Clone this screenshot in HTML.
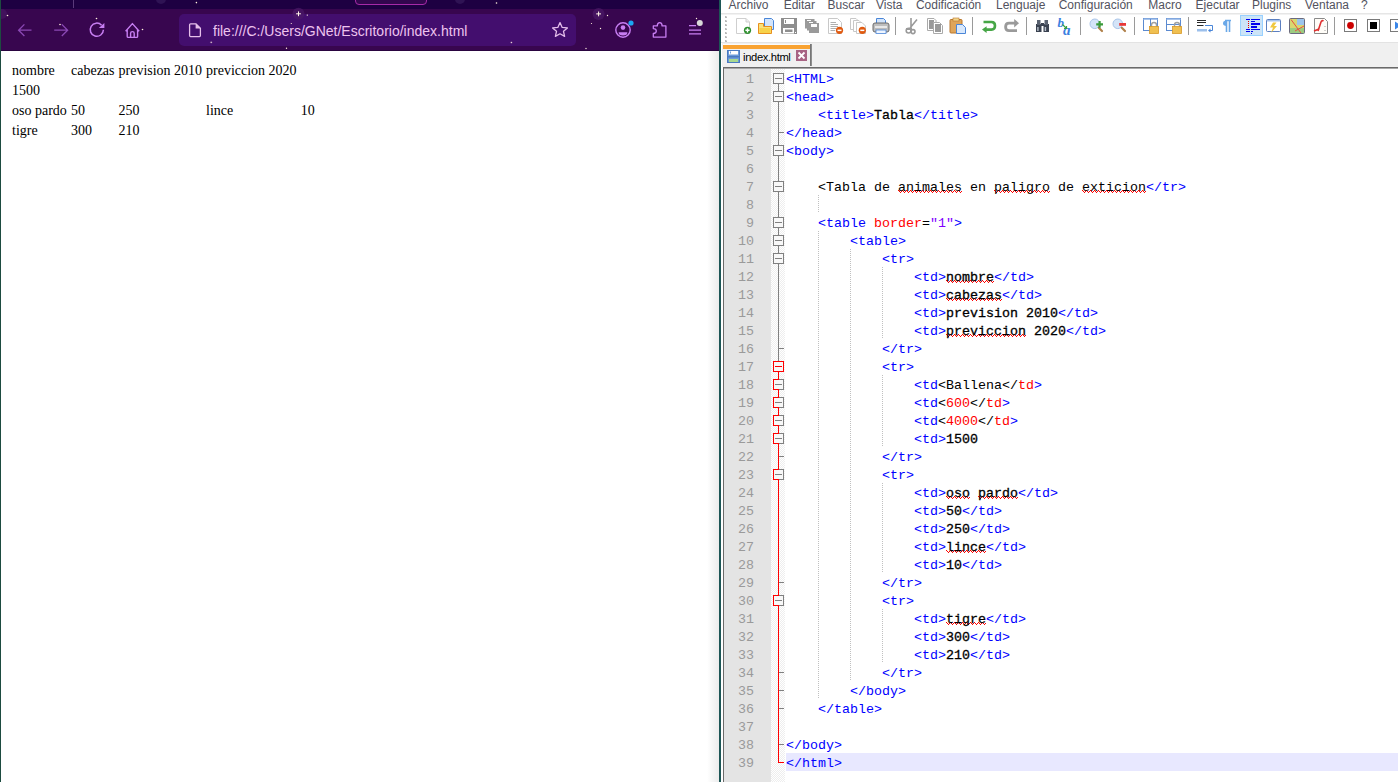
<!DOCTYPE html><html><head><meta charset="utf-8"><title>r</title><style>
*{margin:0;padding:0;box-sizing:border-box}
html,body{width:1398px;height:782px;overflow:hidden;background:#fff;position:relative}
.a{position:absolute}
.sans{font-family:"Liberation Sans",sans-serif}
.serif{font-family:"Liberation Serif",serif}
.mono{font-family:"Liberation Mono",monospace}
</style></head><body><div class="a" style="left:0;top:0;width:719px;height:782px;background:#fff"></div>
<div class="a" style="left:0;top:0;width:719px;height:9px;background:#1e0042"></div>
<div class="a" style="left:355px;top:-10px;width:72px;height:15px;border:1.5px solid #a62aa8;border-radius:4px;background:#32074e"></div>
<div class="a" style="left:0;top:9px;width:719px;height:41px;background:#38064f"></div>
<div class="a" style="left:0;top:50px;width:719px;height:1px;background:#2a0440"></div>
<div class="a" style="left:179px;top:14px;width:397px;height:32px;background:#430e6e;border-radius:5px"></div>
<div class="a sans" style="left:213px;top:22px;font-size:14px;line-height:18px;color:#eec4ee;white-space:nowrap">file:///C:/Users/GNet/Escritorio/index.html</div>
<svg class="a" style="left:0;top:0" width="719" height="51" viewBox="0 0 719 51"><circle cx="2" cy="14" r="5" fill="#4a1a66" opacity="0.6"/><circle cx="161" cy="-1" r="5" fill="#3a2060" opacity="0.6"/><circle cx="460" cy="-1" r="5" fill="#3a2060" opacity="0.6"/><circle cx="298.5" cy="13.8" r="6" fill="#4b1a68" opacity="0.7"/><circle cx="598.6" cy="13.9" r="6" fill="#4b1a68" opacity="0.7"/><line x1="73.5" y1="0" x2="73.5" y2="8" stroke="#5a3a7a" stroke-width="1"/><path d="M31.5 30.2H18.6M24.4 24.4L18.6 30.2L24.4 36" fill="none" stroke="#8a48b4" stroke-width="1.3"/><path d="M54.2 30.2H67.6M61.8 24.4L67.6 30.2L61.8 36" fill="none" stroke="#8a48b4" stroke-width="1.3"/><path d="M103.4 29.8A6.6 6.6 0 1 1 101.6 25.2" fill="none" stroke="#c77ef2" stroke-width="1.5"/><path d="M98.8 27.9L104.4 22.9V27.9Z" fill="#c77ef2"/><path d="M125.6 31.2L132.4 23.6L139.2 31.2M127.2 29.6V36.4Q127.2 37.4 128.2 37.4H136.6Q137.6 37.4 137.6 36.4V29.6M130.6 37.4V33.2Q130.6 31.6 132.4 31.6Q134.2 31.6 134.2 33.2V37.4" fill="none" stroke="#c77ef2" stroke-width="1.4" stroke-linejoin="round"/><path d="M189.6 24.8Q189.6 23.8 190.6 23.8H196L200.4 28.2V35.6Q200.4 36.6 199.4 36.6H190.6Q189.6 36.6 189.6 35.6Z" fill="none" stroke="#e6c0ea" stroke-width="1.3"/><path d="M195.6 23.8V28.6H200.4Z" fill="#e6c0ea"/><path d="M560 22.6L562.2 27.4L567.4 27.9L563.5 31.3L564.6 36.4L560 33.8L555.4 36.4L556.5 31.3L552.6 27.9L557.8 27.4Z" fill="none" stroke="#e3bdea" stroke-width="1.3" stroke-linejoin="round"/><circle cx="623" cy="30" r="7.2" fill="none" stroke="#c77ef2" stroke-width="1.4"/><circle cx="623" cy="27.6" r="2.3" fill="#c77ef2"/><path d="M618.6 32.2H627.4Q627.4 35.4 623 35.4Q618.6 35.4 618.6 32.2Z" fill="#c77ef2"/><circle cx="631" cy="23" r="2.6" fill="#1ba6f2"/><path d="M653.3 25.9H657.3Q657.3 22.6 659.7 22.6Q662.1 22.6 662.1 25.9H665.9V37.1H653.3V33.5Q656.3 33.5 656.3 31.05Q656.3 28.6 653.3 28.6Z" fill="none" stroke="#c77ef2" stroke-width="1.3" stroke-linejoin="round"/><path d="M689 25.6H696M689 30.2H701M689 33.8H701" fill="none" stroke="#c77ef2" stroke-width="1.3"/><circle cx="699.8" cy="23.1" r="3" fill="#d8d8d8"/><path d="M298.5 11.4V16.2M296.1 13.8H300.9" stroke="#fff3e6" stroke-width="1"/><path d="M598.6 11.5V16.3M596.2 13.9H601" stroke="#fff3e6" stroke-width="1"/><circle cx="7.5" cy="15.5" r="0.8" fill="#fff0dc"/><circle cx="60" cy="24.5" r="0.8" fill="#fff0dc"/><circle cx="96.5" cy="18.5" r="0.8" fill="#fff0dc"/><circle cx="142.5" cy="29.5" r="0.8" fill="#fff0dc"/><circle cx="196.4" cy="2.6" r="0.8" fill="#fff0dc"/><circle cx="496.5" cy="3" r="0.8" fill="#fff0dc"/><circle cx="307.3" cy="15.1" r="0.7" fill="#fff0dc"/><circle cx="291.3" cy="23.5" r="0.6" fill="#fff0dc"/><circle cx="286.5" cy="48.3" r="0.7" fill="#fff0dc"/><circle cx="607.5" cy="15.5" r="0.7" fill="#fff0dc"/><circle cx="591.5" cy="23.5" r="0.6" fill="#fff0dc"/><circle cx="600.5" cy="28.5" r="0.7" fill="#fff0dc"/><circle cx="586" cy="48.5" r="0.7" fill="#fff0dc"/><circle cx="696.5" cy="18.5" r="0.7" fill="#fff0dc"/><path d="M211.2 40.8L212.7 42.3L211.2 43.8L209.7 42.3Z" fill="#6a3a8a"/><circle cx="211.2" cy="42.3" r=".6" fill="#fff0dc"/><path d="M511.4 41L512.9 42.5L511.4 44L509.9 42.5Z" fill="#6a3a8a"/><circle cx="511.4" cy="42.5" r=".6" fill="#fff0dc"/></svg>
<div class="a" style="left:707px;top:51px;width:12px;height:731px;background:linear-gradient(to right,rgba(230,230,230,0),#ececec)"></div>
<div class="a" style="left:0;top:0;width:1px;height:782px;background:#1d4b40"></div>
<div class="a" style="left:719px;top:0;width:2px;height:782px;background:#1d5656"></div>
<div class="a serif" style="left:12px;top:64.3px;font-size:14px;line-height:14px;color:#000;white-space:nowrap">nombre</div>
<div class="a serif" style="left:71px;top:64.3px;font-size:14px;line-height:14px;color:#000;white-space:nowrap">cabezas</div>
<div class="a serif" style="left:118.5px;top:64.3px;font-size:14px;line-height:14px;color:#000;white-space:nowrap">prevision 2010</div>
<div class="a serif" style="left:206px;top:64.3px;font-size:14px;line-height:14px;color:#000;white-space:nowrap">previccion 2020</div>
<div class="a serif" style="left:12px;top:84.3px;font-size:14px;line-height:14px;color:#000;white-space:nowrap">1500</div>
<div class="a serif" style="left:12px;top:104.3px;font-size:14px;line-height:14px;color:#000;white-space:nowrap">oso pardo</div>
<div class="a serif" style="left:71px;top:104.3px;font-size:14px;line-height:14px;color:#000;white-space:nowrap">50</div>
<div class="a serif" style="left:118.5px;top:104.3px;font-size:14px;line-height:14px;color:#000;white-space:nowrap">250</div>
<div class="a serif" style="left:206px;top:104.3px;font-size:14px;line-height:14px;color:#000;white-space:nowrap">lince</div>
<div class="a serif" style="left:300.8px;top:104.3px;font-size:14px;line-height:14px;color:#000;white-space:nowrap">10</div>
<div class="a serif" style="left:12px;top:123.8px;font-size:14px;line-height:14px;color:#000;white-space:nowrap">tigre</div>
<div class="a serif" style="left:71px;top:123.8px;font-size:14px;line-height:14px;color:#000;white-space:nowrap">300</div>
<div class="a serif" style="left:118.5px;top:123.8px;font-size:14px;line-height:14px;color:#000;white-space:nowrap">210</div>
<div class="a" style="left:721px;top:0;width:677px;height:782px;background:#fff"></div>
<div class="a sans" style="left:728.5px;top:-2px;font-size:12px;line-height:14px;color:#52525e;white-space:nowrap">Archivo</div>
<div class="a sans" style="left:783.7px;top:-2px;font-size:12px;line-height:14px;color:#52525e;white-space:nowrap">Editar</div>
<div class="a sans" style="left:827.5px;top:-2px;font-size:12px;line-height:14px;color:#52525e;white-space:nowrap">Buscar</div>
<div class="a sans" style="left:876px;top:-2px;font-size:12px;line-height:14px;color:#52525e;white-space:nowrap">Vista</div>
<div class="a sans" style="left:915.9px;top:-2px;font-size:12px;line-height:14px;color:#52525e;white-space:nowrap">Codificación</div>
<div class="a sans" style="left:996px;top:-2px;font-size:12px;line-height:14px;color:#52525e;white-space:nowrap">Lenguaje</div>
<div class="a sans" style="left:1058.7px;top:-2px;font-size:12px;line-height:14px;color:#52525e;white-space:nowrap">Configuración</div>
<div class="a sans" style="left:1148.3px;top:-2px;font-size:12px;line-height:14px;color:#52525e;white-space:nowrap">Macro</div>
<div class="a sans" style="left:1195.6px;top:-2px;font-size:12px;line-height:14px;color:#52525e;white-space:nowrap">Ejecutar</div>
<div class="a sans" style="left:1252px;top:-2px;font-size:12px;line-height:14px;color:#52525e;white-space:nowrap">Plugins</div>
<div class="a sans" style="left:1305px;top:-2px;font-size:12px;line-height:14px;color:#52525e;white-space:nowrap">Ventana</div>
<div class="a sans" style="left:1361px;top:-2px;font-size:12px;line-height:14px;color:#52525e;white-space:nowrap">?</div>
<div class="a" style="left:721px;top:13px;width:677px;height:1px;background:#e6e6e6"></div>
<svg class="a" style="left:724px;top:14px" width="5" height="28"><rect x="1" y="2" width="2" height="2" fill="#b8b8b8"/><rect x="2" y="2" width="1" height="1" fill="#d8d8d8"/><rect x="1" y="6" width="2" height="2" fill="#b8b8b8"/><rect x="2" y="6" width="1" height="1" fill="#d8d8d8"/><rect x="1" y="10" width="2" height="2" fill="#b8b8b8"/><rect x="2" y="10" width="1" height="1" fill="#d8d8d8"/><rect x="1" y="14" width="2" height="2" fill="#b8b8b8"/><rect x="2" y="14" width="1" height="1" fill="#d8d8d8"/><rect x="1" y="18" width="2" height="2" fill="#b8b8b8"/><rect x="2" y="18" width="1" height="1" fill="#d8d8d8"/><rect x="1" y="22" width="2" height="2" fill="#b8b8b8"/><rect x="2" y="22" width="1" height="1" fill="#d8d8d8"/><rect x="1" y="26" width="2" height="2" fill="#b8b8b8"/><rect x="2" y="26" width="1" height="1" fill="#d8d8d8"/></svg>
<div class="a" style="left:721px;top:14px;width:677px;height:1px;background:#f2f2f2"></div>
<svg class="a" style="left:0;top:0" width="1398" height="42" viewBox="0 0 1398 42"><path d="M736.5 18.5H746L749.5 22V33.5H736.5Z" fill="#fff" stroke="#cfcfcf"/><path d="M746 18.5V22H749.5" fill="#eee" stroke="#cfcfcf"/><circle cx="747.5" cy="30.3" r="3.6" fill="#2f8f2f"/><path d="M747.5 28.2V32.4M745.4 30.3H749.6" stroke="#fff" stroke-width="1.4"/><path d="M764.5 18.5H771.5L773.5 20.5V29.5H764.5Z" fill="#d2e4fb" stroke="#4a86d8"/><path d="M758.5 23.5H763.5V26.5H771.5V33.5H758.5Z" fill="#fae27a" stroke="#e8901e"/><rect x="759.5" y="28" width="11" height="5" fill="#f7d24a"/><path d="M781 18H797V34H782L781 33Z" fill="#8e8e8e"/><rect x="784" y="19" width="10" height="5" fill="#fff"/><rect x="785" y="20" width="1" height="3" fill="#8e8e8e"/><rect x="783" y="28" width="11" height="5.5" fill="#fff"/><rect x="785" y="29.5" width="7.5" height="2.5" fill="#8e8e8e"/><rect x="795" y="32" width="1" height="1" fill="#fff"/><rect x="805" y="19" width="9.5" height="9.5" fill="#9a9a9a"/><rect x="807" y="21" width="9.5" height="9.5" fill="#9a9a9a"/><rect x="809" y="23" width="10" height="10" fill="#9a9a9a"/><rect x="807" y="20" width="4" height="1" fill="#fff"/><rect x="809" y="22" width="4" height="1" fill="#fff"/><rect x="811" y="24" width="6" height="3" fill="#fff"/><path d="M828.5 18.5H837.5L841.5 22.5V33.5H828.5Z" fill="#fff" stroke="#c8c8c8"/><path d="M830.5 22.5H836M830.5 24.5H838M830.5 26.5H838M830.5 28.5H836M830.5 30.5H835" stroke="#9a9a9a" stroke-width="0.8"/><circle cx="839.5" cy="30.3" r="3.6" fill="#e05a10"/><rect x="837.5" y="29.6" width="4" height="1.5" fill="#fff"/><path d="M850.5 18.5H856L858 20.5V29.5H850.5Z" fill="#fff" stroke="#c8c8c8"/><path d="M853.5 20.5H859L861 22.5V31.5H853.5Z" fill="#fff" stroke="#c8c8c8"/><path d="M856.5 22.5H862L865.5 26V33.5H856.5Z" fill="#fff" stroke="#c8c8c8"/><circle cx="862.3" cy="30.3" r="3.6" fill="#e05a10"/><rect x="860.3" y="29.6" width="4" height="1.5" fill="#fff"/><path d="M876.5 18.5H883.5L885.5 20.5V25H876.5Z" fill="#d2e4fb" stroke="#4a86d8"/><rect x="873" y="23" width="16" height="9" rx="2" fill="#bdbdbd" stroke="#6a6a6a"/><rect x="875" y="26" width="12" height="2" fill="#e8e8e8"/><rect x="876" y="30" width="10" height="3.5" fill="#eef5ff" stroke="#4a86d8" stroke-width="0.8"/><rect x="895" y="17" width="1" height="18" fill="#9a9a9a"/><path d="M911 18V28M917 19.5L910 28" stroke="#9a9a9a" stroke-width="1.6"/><circle cx="908.6" cy="30.6" r="2.4" fill="none" stroke="#9a9a9a" stroke-width="1.6"/><circle cx="913" cy="31.6" r="2" fill="none" stroke="#9a9a9a" stroke-width="1.6"/><rect x="906" y="28" width="6" height="2" fill="#9a9a9a"/><path d="M927.5 18.5H934L936 20.5V30.5H927.5Z" fill="#fff" stroke="#aaa"/><rect x="929" y="20" width="5" height="9" fill="#9a9a9a"/><path d="M933.5 22.5H939.5L942.5 25.5V33.5H933.5Z" fill="#fff" stroke="#aaa"/><rect x="935" y="24" width="6" height="8" fill="#9a9a9a"/><rect x="950" y="19.5" width="12" height="13.5" rx="1" fill="#dfa55a" stroke="#b8772e"/><rect x="953" y="18" width="6" height="3" fill="#f2d48a" stroke="#b8772e" stroke-width="0.6"/><path d="M956.5 24.5H962.5L965.5 27.5V33.5H956.5Z" fill="#d8e8fc" stroke="#4a86d8"/><rect x="972" y="17" width="1" height="18" fill="#9a9a9a"/><path d="M983.5 22H991.5Q995 22 995 25.8Q995 29.6 991.5 29.6H986" fill="none" stroke="#46a646" stroke-width="2.6"/><path d="M982 29.6L986.6 26.2V33Z" fill="#46a646"/><path d="M1016 23.2H1009Q1005.6 23.2 1005.6 27Q1005.6 30.6 1009 30.6H1017" fill="none" stroke="#9a9a9a" stroke-width="2.8"/><path d="M1019 23.2L1014.2 19V27.4Z" fill="#9a9a9a"/><rect x="1026" y="17" width="1" height="18" fill="#9a9a9a"/><rect x="1036" y="24" width="5.5" height="8" fill="#3a4250"/><rect x="1043.5" y="24" width="5.5" height="8" fill="#3a4250"/><rect x="1037" y="20" width="3.5" height="5" fill="#5a6270"/><rect x="1044.5" y="20" width="3.5" height="5" fill="#5a6270"/><rect x="1041" y="23" width="3" height="3" fill="#3a4250"/><rect x="1037.2" y="27" width="1.4" height="4" fill="#b8c0cc"/><rect x="1044.7" y="27" width="1.4" height="4" fill="#b8c0cc"/><text x="1057.5" y="27" font-family="Liberation Serif" font-style="italic" font-weight="bold" font-size="13" fill="#3b7fe0">b</text><text x="1063" y="34.5" font-family="Liberation Serif" font-style="italic" font-weight="bold" font-size="15" fill="#3b7fe0">a</text><path d="M1062.5 24.5L1066.5 28.5M1066.5 26V28.5H1064" fill="none" stroke="#3aa040" stroke-width="1.2"/><rect x="1080" y="17" width="1" height="18" fill="#9a9a9a"/><circle cx="1094.8" cy="23.8" r="4.8" fill="#d4e4f8" stroke="#a8c4e8"/><path d="M1098.8 27.8L1102 31" stroke="#b0804a" stroke-width="2.2" stroke-linecap="round"/><path d="M1099.6 21V27.8M1096.2 24.4H1103" stroke="#3a9a3a" stroke-width="2.2"/><circle cx="1117.8" cy="23.8" r="4.8" fill="#d4e4f8" stroke="#a8c4e8"/><path d="M1121.8 27.8L1125 31" stroke="#b0804a" stroke-width="2.2" stroke-linecap="round"/><rect x="1119.2" y="23" width="6.8" height="2.8" fill="#e83838"/><rect x="1134" y="17" width="1" height="18" fill="#9a9a9a"/><rect x="1143.5" y="18.5" width="14" height="12" fill="#fff" stroke="#5b8ad0"/><rect x="1143.5" y="18.5" width="14" height="1.5" fill="#a8c4ec"/><path d="M1150.5 19V30" stroke="#5b8ad0"/><path d="M1151.5 27V25Q1151.5 22.5 1154 22.5Q1156.5 22.5 1156.5 25V27" fill="none" stroke="#a0a0a0" stroke-width="1.4"/><rect x="1149.5" y="26.5" width="9" height="7" fill="#f0c050" stroke="#d89a28" stroke-width="0.8"/><rect x="1166.5" y="18.5" width="14" height="12" fill="#fff" stroke="#5b8ad0"/><rect x="1166.5" y="18.5" width="14" height="1.5" fill="#a8c4ec"/><path d="M1167 24.5H1180" stroke="#5b8ad0"/><path d="M1174.5 27V25Q1174.5 22.5 1177 22.5Q1179.5 22.5 1179.5 25V27" fill="none" stroke="#a0a0a0" stroke-width="1.4"/><rect x="1172.5" y="26.5" width="9" height="7" fill="#f0c050" stroke="#d89a28" stroke-width="0.8"/><rect x="1188" y="17" width="1" height="18" fill="#9a9a9a"/><path d="M1197 20.5H1206M1197 22.5H1206M1197 25.5H1203.5" stroke="#111" stroke-width="0.9"/><path d="M1205 25.5H1212.5V30.5H1209" fill="none" stroke="#4a86d8" stroke-width="1"/><path d="M1208 30.5L1210.5 28.5V32.5Z" fill="#4a86d8"/><rect x="1197" y="29" width="10" height="2.5" fill="#9cc0ec"/><path d="M1226.5 20.5Q1223 20.5 1223 23.3Q1223 26 1226.5 26Z" fill="#6aa8e8"/><path d="M1226.5 20V32M1229.5 20V32M1225 20.5H1231" stroke="#6aa8e8" stroke-width="1.6"/><rect x="1240.5" y="15.5" width="22" height="20" fill="#cce4f7" stroke="#99d1ff"/><g fill="#0000ee"><rect x="1246" y="19" width="4" height="1"/><rect x="1251" y="19" width="9" height="1"/><rect x="1251" y="21" width="4" height="1"/><rect x="1251" y="23" width="9" height="2"/><rect x="1251" y="26" width="6" height="2"/><rect x="1246" y="29" width="4" height="1"/><rect x="1251" y="29" width="9" height="1"/><rect x="1246" y="31" width="4" height="1"/><rect x="1251" y="31" width="2" height="1"/><rect x="1251" y="33" width="1" height="1"/></g><g fill="#ee0000"><rect x="1248" y="21" width="1" height="1"/><rect x="1248" y="23" width="1" height="1"/><rect x="1248" y="25" width="1" height="1"/><rect x="1248" y="27" width="1" height="1"/></g><rect x="1266.5" y="19.5" width="14" height="12" rx="1" fill="#fff" stroke="#5b7fc0"/><rect x="1267" y="20" width="13" height="1.5" fill="#a8c4ec"/><path d="M1273 22.5L1276.5 22.5L1274 26H1277L1271 33L1273 27.5H1270Z" fill="#f0c840"/><rect x="1289.5" y="18.5" width="15" height="15" rx="1" fill="#d8d870" stroke="#6a6a80"/><rect x="1297" y="19" width="7" height="6" fill="#9cc4ec"/><rect x="1290" y="28" width="14" height="5" fill="#9ccc80"/><path d="M1291 19.5L1301 33M1295 31L1304 26" stroke="#e85040" stroke-width="1"/><path d="M1314.5 18.5H1324.5L1327.5 21.5V33.5H1314.5Z" fill="#fffdf8" stroke="#8a8a8a"/><path d="M1318 31L1321 22Q1322 20 1323.5 21" fill="none" stroke="#e03030" stroke-width="1.6"/><path d="M1314 31L1319 29" stroke="#e03030" stroke-width="1.6"/><path d="M1325 26V27M1325 30V31" stroke="#888" stroke-width="0.8"/><rect x="1334" y="17" width="1" height="18" fill="#9a9a9a"/><rect x="1344.5" y="19.5" width="12" height="12" fill="#fff" stroke="#7a7a7a"/><circle cx="1350.5" cy="25.5" r="3.4" fill="#cc0000"/><rect x="1367.5" y="19.5" width="12" height="12" fill="#fff" stroke="#7a7a7a"/><rect x="1370" y="22" width="7" height="7" fill="#000"/><rect x="1390.5" y="19.5" width="12" height="12" fill="#fff" stroke="#7a7a7a"/><path d="M1395 21.5L1401 25.5L1395 29.5Z" fill="#3a86e8"/></svg>
<div class="a" style="left:721px;top:42px;width:677px;height:1px;background:#e3e3e3"></div>
<div class="a" style="left:722px;top:43px;width:676px;height:24px;background:#f0f0f0"></div>
<div class="a" style="left:723px;top:44px;width:88px;height:1px;background:#fbfbfb"></div>
<div class="a" style="left:723px;top:45px;width:87px;height:4px;background:#f9a332"></div>
<div class="a" style="left:810px;top:44px;width:2px;height:22px;background:linear-gradient(to right,#6a6a6a,#9a9a9a)"></div>
<div class="a sans" style="left:743px;top:51px;font-size:11.2px;line-height:12px;color:#000;letter-spacing:-0.35px;white-space:nowrap">index.html</div>
<svg class="a" style="left:0;top:0" width="1398" height="68" viewBox="0 0 1398 68"><rect x="727.5" y="50.5" width="12" height="12" fill="#6a9ad8" stroke="#4a7ac0"/><rect x="729" y="51" width="9" height="3.5" fill="#fff"/><rect x="730" y="51.5" width="1" height="2" fill="#6a9ad8"/><rect x="728" y="56" width="11" height="1.5" fill="#4a7ac0"/><rect x="729" y="59" width="9" height="3" fill="#a8d890"/><rect x="796" y="50" width="11" height="11" fill="#a86484"/><path d="M798.5 52.5L804.5 58.5M804.5 52.5L798.5 58.5" stroke="#fff" stroke-width="1.8"/></svg>
<div class="a" style="left:723px;top:67px;width:675px;height:1px;background:#6a6a6a"></div>
<div class="a" style="left:723px;top:68px;width:675px;height:1px;background:#a8a8a8"></div>
<div class="a" style="left:723px;top:67px;width:1px;height:715px;background:#6a6a6a"></div>
<div class="a" style="left:724px;top:69px;width:47px;height:713px;background:#e4e4e4"></div>
<div class="a" style="left:771px;top:69px;width:14px;height:713px;background:repeating-conic-gradient(#eeeeee 0 25%,#ffffff 0 50%) 0 0/2px 2px"></div>
<div class="a" style="left:786px;top:753px;width:613px;height:18px;background:#e8e8ff"></div>
<svg class="a" style="left:0;top:0" width="1398" height="782" viewBox="0 0 1398 782"><rect x="778" y="83" width="1" height="278" fill="#808080"/><rect x="778" y="371" width="1" height="391" fill="#ff0000"/><rect x="773" y="73" width="11" height="11" fill="#808080"/><rect x="774" y="74" width="9" height="9" fill="#f8f8f8"/><rect x="775" y="78" width="7" height="1" fill="#808080"/><rect x="773" y="91" width="11" height="11" fill="#808080"/><rect x="774" y="92" width="9" height="9" fill="#f8f8f8"/><rect x="775" y="96" width="7" height="1" fill="#808080"/><rect x="773" y="145" width="11" height="11" fill="#808080"/><rect x="774" y="146" width="9" height="9" fill="#f8f8f8"/><rect x="775" y="150" width="7" height="1" fill="#808080"/><rect x="773" y="181" width="11" height="11" fill="#808080"/><rect x="774" y="182" width="9" height="9" fill="#f8f8f8"/><rect x="775" y="186" width="7" height="1" fill="#808080"/><rect x="773" y="217" width="11" height="11" fill="#808080"/><rect x="774" y="218" width="9" height="9" fill="#f8f8f8"/><rect x="775" y="222" width="7" height="1" fill="#808080"/><rect x="773" y="235" width="11" height="11" fill="#808080"/><rect x="774" y="236" width="9" height="9" fill="#f8f8f8"/><rect x="775" y="240" width="7" height="1" fill="#808080"/><rect x="773" y="253" width="11" height="11" fill="#808080"/><rect x="774" y="254" width="9" height="9" fill="#f8f8f8"/><rect x="775" y="258" width="7" height="1" fill="#808080"/><rect x="773" y="361" width="11" height="11" fill="#ff0000"/><rect x="774" y="362" width="9" height="9" fill="#f8f8f8"/><rect x="775" y="366" width="7" height="1" fill="#ff0000"/><rect x="773" y="379" width="11" height="11" fill="#808080"/><rect x="774" y="380" width="9" height="9" fill="#f8f8f8"/><rect x="775" y="384" width="7" height="1" fill="#808080"/><rect x="773" y="379" width="1" height="11" fill="#ff0000"/><rect x="773" y="379" width="6" height="1" fill="#ff0000"/><rect x="773" y="389" width="6" height="1" fill="#ff0000"/><rect x="773" y="397" width="11" height="11" fill="#808080"/><rect x="774" y="398" width="9" height="9" fill="#f8f8f8"/><rect x="775" y="402" width="7" height="1" fill="#808080"/><rect x="773" y="397" width="1" height="11" fill="#ff0000"/><rect x="773" y="397" width="6" height="1" fill="#ff0000"/><rect x="773" y="407" width="6" height="1" fill="#ff0000"/><rect x="773" y="415" width="11" height="11" fill="#808080"/><rect x="774" y="416" width="9" height="9" fill="#f8f8f8"/><rect x="775" y="420" width="7" height="1" fill="#808080"/><rect x="773" y="415" width="1" height="11" fill="#ff0000"/><rect x="773" y="415" width="6" height="1" fill="#ff0000"/><rect x="773" y="425" width="6" height="1" fill="#ff0000"/><rect x="773" y="433" width="11" height="11" fill="#808080"/><rect x="774" y="434" width="9" height="9" fill="#f8f8f8"/><rect x="775" y="438" width="7" height="1" fill="#808080"/><rect x="773" y="433" width="1" height="11" fill="#ff0000"/><rect x="773" y="433" width="6" height="1" fill="#ff0000"/><rect x="773" y="443" width="6" height="1" fill="#ff0000"/><rect x="773" y="469" width="11" height="11" fill="#808080"/><rect x="774" y="470" width="9" height="9" fill="#f8f8f8"/><rect x="775" y="474" width="7" height="1" fill="#808080"/><rect x="773" y="469" width="1" height="11" fill="#ff0000"/><rect x="773" y="469" width="6" height="1" fill="#ff0000"/><rect x="773" y="479" width="6" height="1" fill="#ff0000"/><rect x="773" y="595" width="11" height="11" fill="#808080"/><rect x="774" y="596" width="9" height="9" fill="#f8f8f8"/><rect x="775" y="600" width="7" height="1" fill="#808080"/><rect x="773" y="595" width="1" height="11" fill="#ff0000"/><rect x="773" y="595" width="6" height="1" fill="#ff0000"/><rect x="773" y="605" width="6" height="1" fill="#ff0000"/><rect x="779" y="132" width="5" height="1" fill="#808080"/><rect x="779" y="348" width="5" height="1" fill="#808080"/><rect x="779" y="456" width="5" height="1" fill="#808080"/><rect x="779" y="582" width="5" height="1" fill="#808080"/><rect x="779" y="672" width="5" height="1" fill="#808080"/><rect x="779" y="690" width="5" height="1" fill="#808080"/><rect x="779" y="708" width="5" height="1" fill="#808080"/><rect x="779" y="744" width="5" height="1" fill="#808080"/><rect x="778" y="762" width="6" height="1" fill="#ff0000"/><rect x="818" y="195" width="1" height="1" fill="#c0c0c0"/><rect x="818" y="197" width="1" height="1" fill="#c0c0c0"/><rect x="818" y="199" width="1" height="1" fill="#c0c0c0"/><rect x="818" y="201" width="1" height="1" fill="#c0c0c0"/><rect x="818" y="203" width="1" height="1" fill="#c0c0c0"/><rect x="818" y="205" width="1" height="1" fill="#c0c0c0"/><rect x="818" y="207" width="1" height="1" fill="#c0c0c0"/><rect x="818" y="209" width="1" height="1" fill="#c0c0c0"/><rect x="818" y="211" width="1" height="1" fill="#c0c0c0"/><rect x="818" y="231" width="1" height="1" fill="#c0c0c0"/><rect x="818" y="233" width="1" height="1" fill="#c0c0c0"/><rect x="818" y="235" width="1" height="1" fill="#c0c0c0"/><rect x="818" y="237" width="1" height="1" fill="#c0c0c0"/><rect x="818" y="239" width="1" height="1" fill="#c0c0c0"/><rect x="818" y="241" width="1" height="1" fill="#c0c0c0"/><rect x="818" y="243" width="1" height="1" fill="#c0c0c0"/><rect x="818" y="245" width="1" height="1" fill="#c0c0c0"/><rect x="818" y="247" width="1" height="1" fill="#c0c0c0"/><rect x="818" y="249" width="1" height="1" fill="#c0c0c0"/><rect x="818" y="251" width="1" height="1" fill="#c0c0c0"/><rect x="818" y="253" width="1" height="1" fill="#c0c0c0"/><rect x="818" y="255" width="1" height="1" fill="#c0c0c0"/><rect x="818" y="257" width="1" height="1" fill="#c0c0c0"/><rect x="818" y="259" width="1" height="1" fill="#c0c0c0"/><rect x="818" y="261" width="1" height="1" fill="#c0c0c0"/><rect x="818" y="263" width="1" height="1" fill="#c0c0c0"/><rect x="818" y="265" width="1" height="1" fill="#c0c0c0"/><rect x="850" y="249" width="1" height="1" fill="#c0c0c0"/><rect x="850" y="251" width="1" height="1" fill="#c0c0c0"/><rect x="850" y="253" width="1" height="1" fill="#c0c0c0"/><rect x="850" y="255" width="1" height="1" fill="#c0c0c0"/><rect x="850" y="257" width="1" height="1" fill="#c0c0c0"/><rect x="850" y="259" width="1" height="1" fill="#c0c0c0"/><rect x="850" y="261" width="1" height="1" fill="#c0c0c0"/><rect x="850" y="263" width="1" height="1" fill="#c0c0c0"/><rect x="850" y="265" width="1" height="1" fill="#c0c0c0"/><rect x="818" y="339" width="1" height="1" fill="#c0c0c0"/><rect x="818" y="341" width="1" height="1" fill="#c0c0c0"/><rect x="818" y="343" width="1" height="1" fill="#c0c0c0"/><rect x="818" y="345" width="1" height="1" fill="#c0c0c0"/><rect x="818" y="347" width="1" height="1" fill="#c0c0c0"/><rect x="818" y="349" width="1" height="1" fill="#c0c0c0"/><rect x="818" y="351" width="1" height="1" fill="#c0c0c0"/><rect x="818" y="353" width="1" height="1" fill="#c0c0c0"/><rect x="818" y="355" width="1" height="1" fill="#c0c0c0"/><rect x="850" y="339" width="1" height="1" fill="#c0c0c0"/><rect x="850" y="341" width="1" height="1" fill="#c0c0c0"/><rect x="850" y="343" width="1" height="1" fill="#c0c0c0"/><rect x="850" y="345" width="1" height="1" fill="#c0c0c0"/><rect x="850" y="347" width="1" height="1" fill="#c0c0c0"/><rect x="850" y="349" width="1" height="1" fill="#c0c0c0"/><rect x="850" y="351" width="1" height="1" fill="#c0c0c0"/><rect x="850" y="353" width="1" height="1" fill="#c0c0c0"/><rect x="850" y="355" width="1" height="1" fill="#c0c0c0"/><rect x="818" y="357" width="1" height="1" fill="#c0c0c0"/><rect x="818" y="359" width="1" height="1" fill="#c0c0c0"/><rect x="818" y="361" width="1" height="1" fill="#c0c0c0"/><rect x="818" y="363" width="1" height="1" fill="#c0c0c0"/><rect x="818" y="365" width="1" height="1" fill="#c0c0c0"/><rect x="818" y="367" width="1" height="1" fill="#c0c0c0"/><rect x="818" y="369" width="1" height="1" fill="#c0c0c0"/><rect x="818" y="371" width="1" height="1" fill="#c0c0c0"/><rect x="818" y="373" width="1" height="1" fill="#c0c0c0"/><rect x="850" y="357" width="1" height="1" fill="#c0c0c0"/><rect x="850" y="359" width="1" height="1" fill="#c0c0c0"/><rect x="850" y="361" width="1" height="1" fill="#c0c0c0"/><rect x="850" y="363" width="1" height="1" fill="#c0c0c0"/><rect x="850" y="365" width="1" height="1" fill="#c0c0c0"/><rect x="850" y="367" width="1" height="1" fill="#c0c0c0"/><rect x="850" y="369" width="1" height="1" fill="#c0c0c0"/><rect x="850" y="371" width="1" height="1" fill="#c0c0c0"/><rect x="850" y="373" width="1" height="1" fill="#c0c0c0"/><rect x="818" y="447" width="1" height="1" fill="#c0c0c0"/><rect x="818" y="449" width="1" height="1" fill="#c0c0c0"/><rect x="818" y="451" width="1" height="1" fill="#c0c0c0"/><rect x="818" y="453" width="1" height="1" fill="#c0c0c0"/><rect x="818" y="455" width="1" height="1" fill="#c0c0c0"/><rect x="818" y="457" width="1" height="1" fill="#c0c0c0"/><rect x="818" y="459" width="1" height="1" fill="#c0c0c0"/><rect x="818" y="461" width="1" height="1" fill="#c0c0c0"/><rect x="818" y="463" width="1" height="1" fill="#c0c0c0"/><rect x="850" y="447" width="1" height="1" fill="#c0c0c0"/><rect x="850" y="449" width="1" height="1" fill="#c0c0c0"/><rect x="850" y="451" width="1" height="1" fill="#c0c0c0"/><rect x="850" y="453" width="1" height="1" fill="#c0c0c0"/><rect x="850" y="455" width="1" height="1" fill="#c0c0c0"/><rect x="850" y="457" width="1" height="1" fill="#c0c0c0"/><rect x="850" y="459" width="1" height="1" fill="#c0c0c0"/><rect x="850" y="461" width="1" height="1" fill="#c0c0c0"/><rect x="850" y="463" width="1" height="1" fill="#c0c0c0"/><rect x="818" y="465" width="1" height="1" fill="#c0c0c0"/><rect x="818" y="467" width="1" height="1" fill="#c0c0c0"/><rect x="818" y="469" width="1" height="1" fill="#c0c0c0"/><rect x="818" y="471" width="1" height="1" fill="#c0c0c0"/><rect x="818" y="473" width="1" height="1" fill="#c0c0c0"/><rect x="818" y="475" width="1" height="1" fill="#c0c0c0"/><rect x="818" y="477" width="1" height="1" fill="#c0c0c0"/><rect x="818" y="479" width="1" height="1" fill="#c0c0c0"/><rect x="818" y="481" width="1" height="1" fill="#c0c0c0"/><rect x="850" y="465" width="1" height="1" fill="#c0c0c0"/><rect x="850" y="467" width="1" height="1" fill="#c0c0c0"/><rect x="850" y="469" width="1" height="1" fill="#c0c0c0"/><rect x="850" y="471" width="1" height="1" fill="#c0c0c0"/><rect x="850" y="473" width="1" height="1" fill="#c0c0c0"/><rect x="850" y="475" width="1" height="1" fill="#c0c0c0"/><rect x="850" y="477" width="1" height="1" fill="#c0c0c0"/><rect x="850" y="479" width="1" height="1" fill="#c0c0c0"/><rect x="850" y="481" width="1" height="1" fill="#c0c0c0"/><rect x="818" y="573" width="1" height="1" fill="#c0c0c0"/><rect x="818" y="575" width="1" height="1" fill="#c0c0c0"/><rect x="818" y="577" width="1" height="1" fill="#c0c0c0"/><rect x="818" y="579" width="1" height="1" fill="#c0c0c0"/><rect x="818" y="581" width="1" height="1" fill="#c0c0c0"/><rect x="818" y="583" width="1" height="1" fill="#c0c0c0"/><rect x="818" y="585" width="1" height="1" fill="#c0c0c0"/><rect x="818" y="587" width="1" height="1" fill="#c0c0c0"/><rect x="818" y="589" width="1" height="1" fill="#c0c0c0"/><rect x="850" y="573" width="1" height="1" fill="#c0c0c0"/><rect x="850" y="575" width="1" height="1" fill="#c0c0c0"/><rect x="850" y="577" width="1" height="1" fill="#c0c0c0"/><rect x="850" y="579" width="1" height="1" fill="#c0c0c0"/><rect x="850" y="581" width="1" height="1" fill="#c0c0c0"/><rect x="850" y="583" width="1" height="1" fill="#c0c0c0"/><rect x="850" y="585" width="1" height="1" fill="#c0c0c0"/><rect x="850" y="587" width="1" height="1" fill="#c0c0c0"/><rect x="850" y="589" width="1" height="1" fill="#c0c0c0"/><rect x="818" y="591" width="1" height="1" fill="#c0c0c0"/><rect x="818" y="593" width="1" height="1" fill="#c0c0c0"/><rect x="818" y="595" width="1" height="1" fill="#c0c0c0"/><rect x="818" y="597" width="1" height="1" fill="#c0c0c0"/><rect x="818" y="599" width="1" height="1" fill="#c0c0c0"/><rect x="818" y="601" width="1" height="1" fill="#c0c0c0"/><rect x="818" y="603" width="1" height="1" fill="#c0c0c0"/><rect x="818" y="605" width="1" height="1" fill="#c0c0c0"/><rect x="818" y="607" width="1" height="1" fill="#c0c0c0"/><rect x="850" y="591" width="1" height="1" fill="#c0c0c0"/><rect x="850" y="593" width="1" height="1" fill="#c0c0c0"/><rect x="850" y="595" width="1" height="1" fill="#c0c0c0"/><rect x="850" y="597" width="1" height="1" fill="#c0c0c0"/><rect x="850" y="599" width="1" height="1" fill="#c0c0c0"/><rect x="850" y="601" width="1" height="1" fill="#c0c0c0"/><rect x="850" y="603" width="1" height="1" fill="#c0c0c0"/><rect x="850" y="605" width="1" height="1" fill="#c0c0c0"/><rect x="850" y="607" width="1" height="1" fill="#c0c0c0"/><rect x="818" y="663" width="1" height="1" fill="#c0c0c0"/><rect x="818" y="665" width="1" height="1" fill="#c0c0c0"/><rect x="818" y="667" width="1" height="1" fill="#c0c0c0"/><rect x="818" y="669" width="1" height="1" fill="#c0c0c0"/><rect x="818" y="671" width="1" height="1" fill="#c0c0c0"/><rect x="818" y="673" width="1" height="1" fill="#c0c0c0"/><rect x="818" y="675" width="1" height="1" fill="#c0c0c0"/><rect x="818" y="677" width="1" height="1" fill="#c0c0c0"/><rect x="818" y="679" width="1" height="1" fill="#c0c0c0"/><rect x="850" y="663" width="1" height="1" fill="#c0c0c0"/><rect x="850" y="665" width="1" height="1" fill="#c0c0c0"/><rect x="850" y="667" width="1" height="1" fill="#c0c0c0"/><rect x="850" y="669" width="1" height="1" fill="#c0c0c0"/><rect x="850" y="671" width="1" height="1" fill="#c0c0c0"/><rect x="850" y="673" width="1" height="1" fill="#c0c0c0"/><rect x="850" y="675" width="1" height="1" fill="#c0c0c0"/><rect x="850" y="677" width="1" height="1" fill="#c0c0c0"/><rect x="850" y="679" width="1" height="1" fill="#c0c0c0"/><rect x="818" y="681" width="1" height="1" fill="#c0c0c0"/><rect x="818" y="683" width="1" height="1" fill="#c0c0c0"/><rect x="818" y="685" width="1" height="1" fill="#c0c0c0"/><rect x="818" y="687" width="1" height="1" fill="#c0c0c0"/><rect x="818" y="689" width="1" height="1" fill="#c0c0c0"/><rect x="818" y="691" width="1" height="1" fill="#c0c0c0"/><rect x="818" y="693" width="1" height="1" fill="#c0c0c0"/><rect x="818" y="695" width="1" height="1" fill="#c0c0c0"/><rect x="818" y="697" width="1" height="1" fill="#c0c0c0"/><rect x="818" y="267" width="1" height="1" fill="#c0c0c0"/><rect x="818" y="269" width="1" height="1" fill="#c0c0c0"/><rect x="818" y="271" width="1" height="1" fill="#c0c0c0"/><rect x="818" y="273" width="1" height="1" fill="#c0c0c0"/><rect x="818" y="275" width="1" height="1" fill="#c0c0c0"/><rect x="818" y="277" width="1" height="1" fill="#c0c0c0"/><rect x="818" y="279" width="1" height="1" fill="#c0c0c0"/><rect x="818" y="281" width="1" height="1" fill="#c0c0c0"/><rect x="818" y="283" width="1" height="1" fill="#c0c0c0"/><rect x="850" y="267" width="1" height="1" fill="#c0c0c0"/><rect x="850" y="269" width="1" height="1" fill="#c0c0c0"/><rect x="850" y="271" width="1" height="1" fill="#c0c0c0"/><rect x="850" y="273" width="1" height="1" fill="#c0c0c0"/><rect x="850" y="275" width="1" height="1" fill="#c0c0c0"/><rect x="850" y="277" width="1" height="1" fill="#c0c0c0"/><rect x="850" y="279" width="1" height="1" fill="#c0c0c0"/><rect x="850" y="281" width="1" height="1" fill="#c0c0c0"/><rect x="850" y="283" width="1" height="1" fill="#c0c0c0"/><rect x="882" y="267" width="1" height="1" fill="#c0c0c0"/><rect x="882" y="269" width="1" height="1" fill="#c0c0c0"/><rect x="882" y="271" width="1" height="1" fill="#c0c0c0"/><rect x="882" y="273" width="1" height="1" fill="#c0c0c0"/><rect x="882" y="275" width="1" height="1" fill="#c0c0c0"/><rect x="882" y="277" width="1" height="1" fill="#c0c0c0"/><rect x="882" y="279" width="1" height="1" fill="#c0c0c0"/><rect x="882" y="281" width="1" height="1" fill="#c0c0c0"/><rect x="882" y="283" width="1" height="1" fill="#c0c0c0"/><rect x="818" y="285" width="1" height="1" fill="#c0c0c0"/><rect x="818" y="287" width="1" height="1" fill="#c0c0c0"/><rect x="818" y="289" width="1" height="1" fill="#c0c0c0"/><rect x="818" y="291" width="1" height="1" fill="#c0c0c0"/><rect x="818" y="293" width="1" height="1" fill="#c0c0c0"/><rect x="818" y="295" width="1" height="1" fill="#c0c0c0"/><rect x="818" y="297" width="1" height="1" fill="#c0c0c0"/><rect x="818" y="299" width="1" height="1" fill="#c0c0c0"/><rect x="818" y="301" width="1" height="1" fill="#c0c0c0"/><rect x="850" y="285" width="1" height="1" fill="#c0c0c0"/><rect x="850" y="287" width="1" height="1" fill="#c0c0c0"/><rect x="850" y="289" width="1" height="1" fill="#c0c0c0"/><rect x="850" y="291" width="1" height="1" fill="#c0c0c0"/><rect x="850" y="293" width="1" height="1" fill="#c0c0c0"/><rect x="850" y="295" width="1" height="1" fill="#c0c0c0"/><rect x="850" y="297" width="1" height="1" fill="#c0c0c0"/><rect x="850" y="299" width="1" height="1" fill="#c0c0c0"/><rect x="850" y="301" width="1" height="1" fill="#c0c0c0"/><rect x="882" y="285" width="1" height="1" fill="#c0c0c0"/><rect x="882" y="287" width="1" height="1" fill="#c0c0c0"/><rect x="882" y="289" width="1" height="1" fill="#c0c0c0"/><rect x="882" y="291" width="1" height="1" fill="#c0c0c0"/><rect x="882" y="293" width="1" height="1" fill="#c0c0c0"/><rect x="882" y="295" width="1" height="1" fill="#c0c0c0"/><rect x="882" y="297" width="1" height="1" fill="#c0c0c0"/><rect x="882" y="299" width="1" height="1" fill="#c0c0c0"/><rect x="882" y="301" width="1" height="1" fill="#c0c0c0"/><rect x="818" y="303" width="1" height="1" fill="#c0c0c0"/><rect x="818" y="305" width="1" height="1" fill="#c0c0c0"/><rect x="818" y="307" width="1" height="1" fill="#c0c0c0"/><rect x="818" y="309" width="1" height="1" fill="#c0c0c0"/><rect x="818" y="311" width="1" height="1" fill="#c0c0c0"/><rect x="818" y="313" width="1" height="1" fill="#c0c0c0"/><rect x="818" y="315" width="1" height="1" fill="#c0c0c0"/><rect x="818" y="317" width="1" height="1" fill="#c0c0c0"/><rect x="818" y="319" width="1" height="1" fill="#c0c0c0"/><rect x="850" y="303" width="1" height="1" fill="#c0c0c0"/><rect x="850" y="305" width="1" height="1" fill="#c0c0c0"/><rect x="850" y="307" width="1" height="1" fill="#c0c0c0"/><rect x="850" y="309" width="1" height="1" fill="#c0c0c0"/><rect x="850" y="311" width="1" height="1" fill="#c0c0c0"/><rect x="850" y="313" width="1" height="1" fill="#c0c0c0"/><rect x="850" y="315" width="1" height="1" fill="#c0c0c0"/><rect x="850" y="317" width="1" height="1" fill="#c0c0c0"/><rect x="850" y="319" width="1" height="1" fill="#c0c0c0"/><rect x="882" y="303" width="1" height="1" fill="#c0c0c0"/><rect x="882" y="305" width="1" height="1" fill="#c0c0c0"/><rect x="882" y="307" width="1" height="1" fill="#c0c0c0"/><rect x="882" y="309" width="1" height="1" fill="#c0c0c0"/><rect x="882" y="311" width="1" height="1" fill="#c0c0c0"/><rect x="882" y="313" width="1" height="1" fill="#c0c0c0"/><rect x="882" y="315" width="1" height="1" fill="#c0c0c0"/><rect x="882" y="317" width="1" height="1" fill="#c0c0c0"/><rect x="882" y="319" width="1" height="1" fill="#c0c0c0"/><rect x="818" y="321" width="1" height="1" fill="#c0c0c0"/><rect x="818" y="323" width="1" height="1" fill="#c0c0c0"/><rect x="818" y="325" width="1" height="1" fill="#c0c0c0"/><rect x="818" y="327" width="1" height="1" fill="#c0c0c0"/><rect x="818" y="329" width="1" height="1" fill="#c0c0c0"/><rect x="818" y="331" width="1" height="1" fill="#c0c0c0"/><rect x="818" y="333" width="1" height="1" fill="#c0c0c0"/><rect x="818" y="335" width="1" height="1" fill="#c0c0c0"/><rect x="818" y="337" width="1" height="1" fill="#c0c0c0"/><rect x="850" y="321" width="1" height="1" fill="#c0c0c0"/><rect x="850" y="323" width="1" height="1" fill="#c0c0c0"/><rect x="850" y="325" width="1" height="1" fill="#c0c0c0"/><rect x="850" y="327" width="1" height="1" fill="#c0c0c0"/><rect x="850" y="329" width="1" height="1" fill="#c0c0c0"/><rect x="850" y="331" width="1" height="1" fill="#c0c0c0"/><rect x="850" y="333" width="1" height="1" fill="#c0c0c0"/><rect x="850" y="335" width="1" height="1" fill="#c0c0c0"/><rect x="850" y="337" width="1" height="1" fill="#c0c0c0"/><rect x="882" y="321" width="1" height="1" fill="#c0c0c0"/><rect x="882" y="323" width="1" height="1" fill="#c0c0c0"/><rect x="882" y="325" width="1" height="1" fill="#c0c0c0"/><rect x="882" y="327" width="1" height="1" fill="#c0c0c0"/><rect x="882" y="329" width="1" height="1" fill="#c0c0c0"/><rect x="882" y="331" width="1" height="1" fill="#c0c0c0"/><rect x="882" y="333" width="1" height="1" fill="#c0c0c0"/><rect x="882" y="335" width="1" height="1" fill="#c0c0c0"/><rect x="882" y="337" width="1" height="1" fill="#c0c0c0"/><rect x="818" y="375" width="1" height="1" fill="#c0c0c0"/><rect x="818" y="377" width="1" height="1" fill="#c0c0c0"/><rect x="818" y="379" width="1" height="1" fill="#c0c0c0"/><rect x="818" y="381" width="1" height="1" fill="#c0c0c0"/><rect x="818" y="383" width="1" height="1" fill="#c0c0c0"/><rect x="818" y="385" width="1" height="1" fill="#c0c0c0"/><rect x="818" y="387" width="1" height="1" fill="#c0c0c0"/><rect x="818" y="389" width="1" height="1" fill="#c0c0c0"/><rect x="818" y="391" width="1" height="1" fill="#c0c0c0"/><rect x="850" y="375" width="1" height="1" fill="#c0c0c0"/><rect x="850" y="377" width="1" height="1" fill="#c0c0c0"/><rect x="850" y="379" width="1" height="1" fill="#c0c0c0"/><rect x="850" y="381" width="1" height="1" fill="#c0c0c0"/><rect x="850" y="383" width="1" height="1" fill="#c0c0c0"/><rect x="850" y="385" width="1" height="1" fill="#c0c0c0"/><rect x="850" y="387" width="1" height="1" fill="#c0c0c0"/><rect x="850" y="389" width="1" height="1" fill="#c0c0c0"/><rect x="850" y="391" width="1" height="1" fill="#c0c0c0"/><rect x="882" y="375" width="1" height="1" fill="#c0c0c0"/><rect x="882" y="377" width="1" height="1" fill="#c0c0c0"/><rect x="882" y="379" width="1" height="1" fill="#c0c0c0"/><rect x="882" y="381" width="1" height="1" fill="#c0c0c0"/><rect x="882" y="383" width="1" height="1" fill="#c0c0c0"/><rect x="882" y="385" width="1" height="1" fill="#c0c0c0"/><rect x="882" y="387" width="1" height="1" fill="#c0c0c0"/><rect x="882" y="389" width="1" height="1" fill="#c0c0c0"/><rect x="882" y="391" width="1" height="1" fill="#c0c0c0"/><rect x="818" y="393" width="1" height="1" fill="#c0c0c0"/><rect x="818" y="395" width="1" height="1" fill="#c0c0c0"/><rect x="818" y="397" width="1" height="1" fill="#c0c0c0"/><rect x="818" y="399" width="1" height="1" fill="#c0c0c0"/><rect x="818" y="401" width="1" height="1" fill="#c0c0c0"/><rect x="818" y="403" width="1" height="1" fill="#c0c0c0"/><rect x="818" y="405" width="1" height="1" fill="#c0c0c0"/><rect x="818" y="407" width="1" height="1" fill="#c0c0c0"/><rect x="818" y="409" width="1" height="1" fill="#c0c0c0"/><rect x="850" y="393" width="1" height="1" fill="#c0c0c0"/><rect x="850" y="395" width="1" height="1" fill="#c0c0c0"/><rect x="850" y="397" width="1" height="1" fill="#c0c0c0"/><rect x="850" y="399" width="1" height="1" fill="#c0c0c0"/><rect x="850" y="401" width="1" height="1" fill="#c0c0c0"/><rect x="850" y="403" width="1" height="1" fill="#c0c0c0"/><rect x="850" y="405" width="1" height="1" fill="#c0c0c0"/><rect x="850" y="407" width="1" height="1" fill="#c0c0c0"/><rect x="850" y="409" width="1" height="1" fill="#c0c0c0"/><rect x="882" y="393" width="1" height="1" fill="#c0c0c0"/><rect x="882" y="395" width="1" height="1" fill="#c0c0c0"/><rect x="882" y="397" width="1" height="1" fill="#c0c0c0"/><rect x="882" y="399" width="1" height="1" fill="#c0c0c0"/><rect x="882" y="401" width="1" height="1" fill="#c0c0c0"/><rect x="882" y="403" width="1" height="1" fill="#c0c0c0"/><rect x="882" y="405" width="1" height="1" fill="#c0c0c0"/><rect x="882" y="407" width="1" height="1" fill="#c0c0c0"/><rect x="882" y="409" width="1" height="1" fill="#c0c0c0"/><rect x="818" y="411" width="1" height="1" fill="#c0c0c0"/><rect x="818" y="413" width="1" height="1" fill="#c0c0c0"/><rect x="818" y="415" width="1" height="1" fill="#c0c0c0"/><rect x="818" y="417" width="1" height="1" fill="#c0c0c0"/><rect x="818" y="419" width="1" height="1" fill="#c0c0c0"/><rect x="818" y="421" width="1" height="1" fill="#c0c0c0"/><rect x="818" y="423" width="1" height="1" fill="#c0c0c0"/><rect x="818" y="425" width="1" height="1" fill="#c0c0c0"/><rect x="818" y="427" width="1" height="1" fill="#c0c0c0"/><rect x="850" y="411" width="1" height="1" fill="#c0c0c0"/><rect x="850" y="413" width="1" height="1" fill="#c0c0c0"/><rect x="850" y="415" width="1" height="1" fill="#c0c0c0"/><rect x="850" y="417" width="1" height="1" fill="#c0c0c0"/><rect x="850" y="419" width="1" height="1" fill="#c0c0c0"/><rect x="850" y="421" width="1" height="1" fill="#c0c0c0"/><rect x="850" y="423" width="1" height="1" fill="#c0c0c0"/><rect x="850" y="425" width="1" height="1" fill="#c0c0c0"/><rect x="850" y="427" width="1" height="1" fill="#c0c0c0"/><rect x="882" y="411" width="1" height="1" fill="#c0c0c0"/><rect x="882" y="413" width="1" height="1" fill="#c0c0c0"/><rect x="882" y="415" width="1" height="1" fill="#c0c0c0"/><rect x="882" y="417" width="1" height="1" fill="#c0c0c0"/><rect x="882" y="419" width="1" height="1" fill="#c0c0c0"/><rect x="882" y="421" width="1" height="1" fill="#c0c0c0"/><rect x="882" y="423" width="1" height="1" fill="#c0c0c0"/><rect x="882" y="425" width="1" height="1" fill="#c0c0c0"/><rect x="882" y="427" width="1" height="1" fill="#c0c0c0"/><rect x="818" y="429" width="1" height="1" fill="#c0c0c0"/><rect x="818" y="431" width="1" height="1" fill="#c0c0c0"/><rect x="818" y="433" width="1" height="1" fill="#c0c0c0"/><rect x="818" y="435" width="1" height="1" fill="#c0c0c0"/><rect x="818" y="437" width="1" height="1" fill="#c0c0c0"/><rect x="818" y="439" width="1" height="1" fill="#c0c0c0"/><rect x="818" y="441" width="1" height="1" fill="#c0c0c0"/><rect x="818" y="443" width="1" height="1" fill="#c0c0c0"/><rect x="818" y="445" width="1" height="1" fill="#c0c0c0"/><rect x="850" y="429" width="1" height="1" fill="#c0c0c0"/><rect x="850" y="431" width="1" height="1" fill="#c0c0c0"/><rect x="850" y="433" width="1" height="1" fill="#c0c0c0"/><rect x="850" y="435" width="1" height="1" fill="#c0c0c0"/><rect x="850" y="437" width="1" height="1" fill="#c0c0c0"/><rect x="850" y="439" width="1" height="1" fill="#c0c0c0"/><rect x="850" y="441" width="1" height="1" fill="#c0c0c0"/><rect x="850" y="443" width="1" height="1" fill="#c0c0c0"/><rect x="850" y="445" width="1" height="1" fill="#c0c0c0"/><rect x="882" y="429" width="1" height="1" fill="#c0c0c0"/><rect x="882" y="431" width="1" height="1" fill="#c0c0c0"/><rect x="882" y="433" width="1" height="1" fill="#c0c0c0"/><rect x="882" y="435" width="1" height="1" fill="#c0c0c0"/><rect x="882" y="437" width="1" height="1" fill="#c0c0c0"/><rect x="882" y="439" width="1" height="1" fill="#c0c0c0"/><rect x="882" y="441" width="1" height="1" fill="#c0c0c0"/><rect x="882" y="443" width="1" height="1" fill="#c0c0c0"/><rect x="882" y="445" width="1" height="1" fill="#c0c0c0"/><rect x="818" y="483" width="1" height="1" fill="#c0c0c0"/><rect x="818" y="485" width="1" height="1" fill="#c0c0c0"/><rect x="818" y="487" width="1" height="1" fill="#c0c0c0"/><rect x="818" y="489" width="1" height="1" fill="#c0c0c0"/><rect x="818" y="491" width="1" height="1" fill="#c0c0c0"/><rect x="818" y="493" width="1" height="1" fill="#c0c0c0"/><rect x="818" y="495" width="1" height="1" fill="#c0c0c0"/><rect x="818" y="497" width="1" height="1" fill="#c0c0c0"/><rect x="818" y="499" width="1" height="1" fill="#c0c0c0"/><rect x="850" y="483" width="1" height="1" fill="#c0c0c0"/><rect x="850" y="485" width="1" height="1" fill="#c0c0c0"/><rect x="850" y="487" width="1" height="1" fill="#c0c0c0"/><rect x="850" y="489" width="1" height="1" fill="#c0c0c0"/><rect x="850" y="491" width="1" height="1" fill="#c0c0c0"/><rect x="850" y="493" width="1" height="1" fill="#c0c0c0"/><rect x="850" y="495" width="1" height="1" fill="#c0c0c0"/><rect x="850" y="497" width="1" height="1" fill="#c0c0c0"/><rect x="850" y="499" width="1" height="1" fill="#c0c0c0"/><rect x="882" y="483" width="1" height="1" fill="#c0c0c0"/><rect x="882" y="485" width="1" height="1" fill="#c0c0c0"/><rect x="882" y="487" width="1" height="1" fill="#c0c0c0"/><rect x="882" y="489" width="1" height="1" fill="#c0c0c0"/><rect x="882" y="491" width="1" height="1" fill="#c0c0c0"/><rect x="882" y="493" width="1" height="1" fill="#c0c0c0"/><rect x="882" y="495" width="1" height="1" fill="#c0c0c0"/><rect x="882" y="497" width="1" height="1" fill="#c0c0c0"/><rect x="882" y="499" width="1" height="1" fill="#c0c0c0"/><rect x="818" y="501" width="1" height="1" fill="#c0c0c0"/><rect x="818" y="503" width="1" height="1" fill="#c0c0c0"/><rect x="818" y="505" width="1" height="1" fill="#c0c0c0"/><rect x="818" y="507" width="1" height="1" fill="#c0c0c0"/><rect x="818" y="509" width="1" height="1" fill="#c0c0c0"/><rect x="818" y="511" width="1" height="1" fill="#c0c0c0"/><rect x="818" y="513" width="1" height="1" fill="#c0c0c0"/><rect x="818" y="515" width="1" height="1" fill="#c0c0c0"/><rect x="818" y="517" width="1" height="1" fill="#c0c0c0"/><rect x="850" y="501" width="1" height="1" fill="#c0c0c0"/><rect x="850" y="503" width="1" height="1" fill="#c0c0c0"/><rect x="850" y="505" width="1" height="1" fill="#c0c0c0"/><rect x="850" y="507" width="1" height="1" fill="#c0c0c0"/><rect x="850" y="509" width="1" height="1" fill="#c0c0c0"/><rect x="850" y="511" width="1" height="1" fill="#c0c0c0"/><rect x="850" y="513" width="1" height="1" fill="#c0c0c0"/><rect x="850" y="515" width="1" height="1" fill="#c0c0c0"/><rect x="850" y="517" width="1" height="1" fill="#c0c0c0"/><rect x="882" y="501" width="1" height="1" fill="#c0c0c0"/><rect x="882" y="503" width="1" height="1" fill="#c0c0c0"/><rect x="882" y="505" width="1" height="1" fill="#c0c0c0"/><rect x="882" y="507" width="1" height="1" fill="#c0c0c0"/><rect x="882" y="509" width="1" height="1" fill="#c0c0c0"/><rect x="882" y="511" width="1" height="1" fill="#c0c0c0"/><rect x="882" y="513" width="1" height="1" fill="#c0c0c0"/><rect x="882" y="515" width="1" height="1" fill="#c0c0c0"/><rect x="882" y="517" width="1" height="1" fill="#c0c0c0"/><rect x="818" y="519" width="1" height="1" fill="#c0c0c0"/><rect x="818" y="521" width="1" height="1" fill="#c0c0c0"/><rect x="818" y="523" width="1" height="1" fill="#c0c0c0"/><rect x="818" y="525" width="1" height="1" fill="#c0c0c0"/><rect x="818" y="527" width="1" height="1" fill="#c0c0c0"/><rect x="818" y="529" width="1" height="1" fill="#c0c0c0"/><rect x="818" y="531" width="1" height="1" fill="#c0c0c0"/><rect x="818" y="533" width="1" height="1" fill="#c0c0c0"/><rect x="818" y="535" width="1" height="1" fill="#c0c0c0"/><rect x="850" y="519" width="1" height="1" fill="#c0c0c0"/><rect x="850" y="521" width="1" height="1" fill="#c0c0c0"/><rect x="850" y="523" width="1" height="1" fill="#c0c0c0"/><rect x="850" y="525" width="1" height="1" fill="#c0c0c0"/><rect x="850" y="527" width="1" height="1" fill="#c0c0c0"/><rect x="850" y="529" width="1" height="1" fill="#c0c0c0"/><rect x="850" y="531" width="1" height="1" fill="#c0c0c0"/><rect x="850" y="533" width="1" height="1" fill="#c0c0c0"/><rect x="850" y="535" width="1" height="1" fill="#c0c0c0"/><rect x="882" y="519" width="1" height="1" fill="#c0c0c0"/><rect x="882" y="521" width="1" height="1" fill="#c0c0c0"/><rect x="882" y="523" width="1" height="1" fill="#c0c0c0"/><rect x="882" y="525" width="1" height="1" fill="#c0c0c0"/><rect x="882" y="527" width="1" height="1" fill="#c0c0c0"/><rect x="882" y="529" width="1" height="1" fill="#c0c0c0"/><rect x="882" y="531" width="1" height="1" fill="#c0c0c0"/><rect x="882" y="533" width="1" height="1" fill="#c0c0c0"/><rect x="882" y="535" width="1" height="1" fill="#c0c0c0"/><rect x="818" y="537" width="1" height="1" fill="#c0c0c0"/><rect x="818" y="539" width="1" height="1" fill="#c0c0c0"/><rect x="818" y="541" width="1" height="1" fill="#c0c0c0"/><rect x="818" y="543" width="1" height="1" fill="#c0c0c0"/><rect x="818" y="545" width="1" height="1" fill="#c0c0c0"/><rect x="818" y="547" width="1" height="1" fill="#c0c0c0"/><rect x="818" y="549" width="1" height="1" fill="#c0c0c0"/><rect x="818" y="551" width="1" height="1" fill="#c0c0c0"/><rect x="818" y="553" width="1" height="1" fill="#c0c0c0"/><rect x="850" y="537" width="1" height="1" fill="#c0c0c0"/><rect x="850" y="539" width="1" height="1" fill="#c0c0c0"/><rect x="850" y="541" width="1" height="1" fill="#c0c0c0"/><rect x="850" y="543" width="1" height="1" fill="#c0c0c0"/><rect x="850" y="545" width="1" height="1" fill="#c0c0c0"/><rect x="850" y="547" width="1" height="1" fill="#c0c0c0"/><rect x="850" y="549" width="1" height="1" fill="#c0c0c0"/><rect x="850" y="551" width="1" height="1" fill="#c0c0c0"/><rect x="850" y="553" width="1" height="1" fill="#c0c0c0"/><rect x="882" y="537" width="1" height="1" fill="#c0c0c0"/><rect x="882" y="539" width="1" height="1" fill="#c0c0c0"/><rect x="882" y="541" width="1" height="1" fill="#c0c0c0"/><rect x="882" y="543" width="1" height="1" fill="#c0c0c0"/><rect x="882" y="545" width="1" height="1" fill="#c0c0c0"/><rect x="882" y="547" width="1" height="1" fill="#c0c0c0"/><rect x="882" y="549" width="1" height="1" fill="#c0c0c0"/><rect x="882" y="551" width="1" height="1" fill="#c0c0c0"/><rect x="882" y="553" width="1" height="1" fill="#c0c0c0"/><rect x="818" y="555" width="1" height="1" fill="#c0c0c0"/><rect x="818" y="557" width="1" height="1" fill="#c0c0c0"/><rect x="818" y="559" width="1" height="1" fill="#c0c0c0"/><rect x="818" y="561" width="1" height="1" fill="#c0c0c0"/><rect x="818" y="563" width="1" height="1" fill="#c0c0c0"/><rect x="818" y="565" width="1" height="1" fill="#c0c0c0"/><rect x="818" y="567" width="1" height="1" fill="#c0c0c0"/><rect x="818" y="569" width="1" height="1" fill="#c0c0c0"/><rect x="818" y="571" width="1" height="1" fill="#c0c0c0"/><rect x="850" y="555" width="1" height="1" fill="#c0c0c0"/><rect x="850" y="557" width="1" height="1" fill="#c0c0c0"/><rect x="850" y="559" width="1" height="1" fill="#c0c0c0"/><rect x="850" y="561" width="1" height="1" fill="#c0c0c0"/><rect x="850" y="563" width="1" height="1" fill="#c0c0c0"/><rect x="850" y="565" width="1" height="1" fill="#c0c0c0"/><rect x="850" y="567" width="1" height="1" fill="#c0c0c0"/><rect x="850" y="569" width="1" height="1" fill="#c0c0c0"/><rect x="850" y="571" width="1" height="1" fill="#c0c0c0"/><rect x="882" y="555" width="1" height="1" fill="#c0c0c0"/><rect x="882" y="557" width="1" height="1" fill="#c0c0c0"/><rect x="882" y="559" width="1" height="1" fill="#c0c0c0"/><rect x="882" y="561" width="1" height="1" fill="#c0c0c0"/><rect x="882" y="563" width="1" height="1" fill="#c0c0c0"/><rect x="882" y="565" width="1" height="1" fill="#c0c0c0"/><rect x="882" y="567" width="1" height="1" fill="#c0c0c0"/><rect x="882" y="569" width="1" height="1" fill="#c0c0c0"/><rect x="882" y="571" width="1" height="1" fill="#c0c0c0"/><rect x="818" y="609" width="1" height="1" fill="#c0c0c0"/><rect x="818" y="611" width="1" height="1" fill="#c0c0c0"/><rect x="818" y="613" width="1" height="1" fill="#c0c0c0"/><rect x="818" y="615" width="1" height="1" fill="#c0c0c0"/><rect x="818" y="617" width="1" height="1" fill="#c0c0c0"/><rect x="818" y="619" width="1" height="1" fill="#c0c0c0"/><rect x="818" y="621" width="1" height="1" fill="#c0c0c0"/><rect x="818" y="623" width="1" height="1" fill="#c0c0c0"/><rect x="818" y="625" width="1" height="1" fill="#c0c0c0"/><rect x="850" y="609" width="1" height="1" fill="#c0c0c0"/><rect x="850" y="611" width="1" height="1" fill="#c0c0c0"/><rect x="850" y="613" width="1" height="1" fill="#c0c0c0"/><rect x="850" y="615" width="1" height="1" fill="#c0c0c0"/><rect x="850" y="617" width="1" height="1" fill="#c0c0c0"/><rect x="850" y="619" width="1" height="1" fill="#c0c0c0"/><rect x="850" y="621" width="1" height="1" fill="#c0c0c0"/><rect x="850" y="623" width="1" height="1" fill="#c0c0c0"/><rect x="850" y="625" width="1" height="1" fill="#c0c0c0"/><rect x="882" y="609" width="1" height="1" fill="#c0c0c0"/><rect x="882" y="611" width="1" height="1" fill="#c0c0c0"/><rect x="882" y="613" width="1" height="1" fill="#c0c0c0"/><rect x="882" y="615" width="1" height="1" fill="#c0c0c0"/><rect x="882" y="617" width="1" height="1" fill="#c0c0c0"/><rect x="882" y="619" width="1" height="1" fill="#c0c0c0"/><rect x="882" y="621" width="1" height="1" fill="#c0c0c0"/><rect x="882" y="623" width="1" height="1" fill="#c0c0c0"/><rect x="882" y="625" width="1" height="1" fill="#c0c0c0"/><rect x="818" y="627" width="1" height="1" fill="#c0c0c0"/><rect x="818" y="629" width="1" height="1" fill="#c0c0c0"/><rect x="818" y="631" width="1" height="1" fill="#c0c0c0"/><rect x="818" y="633" width="1" height="1" fill="#c0c0c0"/><rect x="818" y="635" width="1" height="1" fill="#c0c0c0"/><rect x="818" y="637" width="1" height="1" fill="#c0c0c0"/><rect x="818" y="639" width="1" height="1" fill="#c0c0c0"/><rect x="818" y="641" width="1" height="1" fill="#c0c0c0"/><rect x="818" y="643" width="1" height="1" fill="#c0c0c0"/><rect x="850" y="627" width="1" height="1" fill="#c0c0c0"/><rect x="850" y="629" width="1" height="1" fill="#c0c0c0"/><rect x="850" y="631" width="1" height="1" fill="#c0c0c0"/><rect x="850" y="633" width="1" height="1" fill="#c0c0c0"/><rect x="850" y="635" width="1" height="1" fill="#c0c0c0"/><rect x="850" y="637" width="1" height="1" fill="#c0c0c0"/><rect x="850" y="639" width="1" height="1" fill="#c0c0c0"/><rect x="850" y="641" width="1" height="1" fill="#c0c0c0"/><rect x="850" y="643" width="1" height="1" fill="#c0c0c0"/><rect x="882" y="627" width="1" height="1" fill="#c0c0c0"/><rect x="882" y="629" width="1" height="1" fill="#c0c0c0"/><rect x="882" y="631" width="1" height="1" fill="#c0c0c0"/><rect x="882" y="633" width="1" height="1" fill="#c0c0c0"/><rect x="882" y="635" width="1" height="1" fill="#c0c0c0"/><rect x="882" y="637" width="1" height="1" fill="#c0c0c0"/><rect x="882" y="639" width="1" height="1" fill="#c0c0c0"/><rect x="882" y="641" width="1" height="1" fill="#c0c0c0"/><rect x="882" y="643" width="1" height="1" fill="#c0c0c0"/><rect x="818" y="645" width="1" height="1" fill="#c0c0c0"/><rect x="818" y="647" width="1" height="1" fill="#c0c0c0"/><rect x="818" y="649" width="1" height="1" fill="#c0c0c0"/><rect x="818" y="651" width="1" height="1" fill="#c0c0c0"/><rect x="818" y="653" width="1" height="1" fill="#c0c0c0"/><rect x="818" y="655" width="1" height="1" fill="#c0c0c0"/><rect x="818" y="657" width="1" height="1" fill="#c0c0c0"/><rect x="818" y="659" width="1" height="1" fill="#c0c0c0"/><rect x="818" y="661" width="1" height="1" fill="#c0c0c0"/><rect x="850" y="645" width="1" height="1" fill="#c0c0c0"/><rect x="850" y="647" width="1" height="1" fill="#c0c0c0"/><rect x="850" y="649" width="1" height="1" fill="#c0c0c0"/><rect x="850" y="651" width="1" height="1" fill="#c0c0c0"/><rect x="850" y="653" width="1" height="1" fill="#c0c0c0"/><rect x="850" y="655" width="1" height="1" fill="#c0c0c0"/><rect x="850" y="657" width="1" height="1" fill="#c0c0c0"/><rect x="850" y="659" width="1" height="1" fill="#c0c0c0"/><rect x="850" y="661" width="1" height="1" fill="#c0c0c0"/><rect x="882" y="645" width="1" height="1" fill="#c0c0c0"/><rect x="882" y="647" width="1" height="1" fill="#c0c0c0"/><rect x="882" y="649" width="1" height="1" fill="#c0c0c0"/><rect x="882" y="651" width="1" height="1" fill="#c0c0c0"/><rect x="882" y="653" width="1" height="1" fill="#c0c0c0"/><rect x="882" y="655" width="1" height="1" fill="#c0c0c0"/><rect x="882" y="657" width="1" height="1" fill="#c0c0c0"/><rect x="882" y="659" width="1" height="1" fill="#c0c0c0"/><rect x="882" y="661" width="1" height="1" fill="#c0c0c0"/><rect x="898" y="190" width="1" height="1" fill="#ff0000"/><rect x="899" y="191" width="1" height="1" fill="#ff0000"/><rect x="900" y="192" width="1" height="1" fill="#ff0000"/><rect x="901" y="191" width="1" height="1" fill="#ff0000"/><rect x="902" y="190" width="1" height="1" fill="#ff0000"/><rect x="903" y="191" width="1" height="1" fill="#ff0000"/><rect x="904" y="192" width="1" height="1" fill="#ff0000"/><rect x="905" y="191" width="1" height="1" fill="#ff0000"/><rect x="906" y="190" width="1" height="1" fill="#ff0000"/><rect x="907" y="191" width="1" height="1" fill="#ff0000"/><rect x="908" y="192" width="1" height="1" fill="#ff0000"/><rect x="909" y="191" width="1" height="1" fill="#ff0000"/><rect x="910" y="190" width="1" height="1" fill="#ff0000"/><rect x="911" y="191" width="1" height="1" fill="#ff0000"/><rect x="912" y="192" width="1" height="1" fill="#ff0000"/><rect x="913" y="191" width="1" height="1" fill="#ff0000"/><rect x="914" y="190" width="1" height="1" fill="#ff0000"/><rect x="915" y="191" width="1" height="1" fill="#ff0000"/><rect x="916" y="192" width="1" height="1" fill="#ff0000"/><rect x="917" y="191" width="1" height="1" fill="#ff0000"/><rect x="918" y="190" width="1" height="1" fill="#ff0000"/><rect x="919" y="191" width="1" height="1" fill="#ff0000"/><rect x="920" y="192" width="1" height="1" fill="#ff0000"/><rect x="921" y="191" width="1" height="1" fill="#ff0000"/><rect x="922" y="190" width="1" height="1" fill="#ff0000"/><rect x="923" y="191" width="1" height="1" fill="#ff0000"/><rect x="924" y="192" width="1" height="1" fill="#ff0000"/><rect x="925" y="191" width="1" height="1" fill="#ff0000"/><rect x="926" y="190" width="1" height="1" fill="#ff0000"/><rect x="927" y="191" width="1" height="1" fill="#ff0000"/><rect x="928" y="192" width="1" height="1" fill="#ff0000"/><rect x="929" y="191" width="1" height="1" fill="#ff0000"/><rect x="930" y="190" width="1" height="1" fill="#ff0000"/><rect x="931" y="191" width="1" height="1" fill="#ff0000"/><rect x="932" y="192" width="1" height="1" fill="#ff0000"/><rect x="933" y="191" width="1" height="1" fill="#ff0000"/><rect x="934" y="190" width="1" height="1" fill="#ff0000"/><rect x="935" y="191" width="1" height="1" fill="#ff0000"/><rect x="936" y="192" width="1" height="1" fill="#ff0000"/><rect x="937" y="191" width="1" height="1" fill="#ff0000"/><rect x="938" y="190" width="1" height="1" fill="#ff0000"/><rect x="939" y="191" width="1" height="1" fill="#ff0000"/><rect x="940" y="192" width="1" height="1" fill="#ff0000"/><rect x="941" y="191" width="1" height="1" fill="#ff0000"/><rect x="942" y="190" width="1" height="1" fill="#ff0000"/><rect x="943" y="191" width="1" height="1" fill="#ff0000"/><rect x="944" y="192" width="1" height="1" fill="#ff0000"/><rect x="945" y="191" width="1" height="1" fill="#ff0000"/><rect x="946" y="190" width="1" height="1" fill="#ff0000"/><rect x="947" y="191" width="1" height="1" fill="#ff0000"/><rect x="948" y="192" width="1" height="1" fill="#ff0000"/><rect x="949" y="191" width="1" height="1" fill="#ff0000"/><rect x="950" y="190" width="1" height="1" fill="#ff0000"/><rect x="951" y="191" width="1" height="1" fill="#ff0000"/><rect x="952" y="192" width="1" height="1" fill="#ff0000"/><rect x="953" y="191" width="1" height="1" fill="#ff0000"/><rect x="954" y="190" width="1" height="1" fill="#ff0000"/><rect x="955" y="191" width="1" height="1" fill="#ff0000"/><rect x="956" y="192" width="1" height="1" fill="#ff0000"/><rect x="957" y="191" width="1" height="1" fill="#ff0000"/><rect x="958" y="190" width="1" height="1" fill="#ff0000"/><rect x="959" y="191" width="1" height="1" fill="#ff0000"/><rect x="960" y="192" width="1" height="1" fill="#ff0000"/><rect x="961" y="191" width="1" height="1" fill="#ff0000"/><rect x="994" y="190" width="1" height="1" fill="#ff0000"/><rect x="995" y="191" width="1" height="1" fill="#ff0000"/><rect x="996" y="192" width="1" height="1" fill="#ff0000"/><rect x="997" y="191" width="1" height="1" fill="#ff0000"/><rect x="998" y="190" width="1" height="1" fill="#ff0000"/><rect x="999" y="191" width="1" height="1" fill="#ff0000"/><rect x="1000" y="192" width="1" height="1" fill="#ff0000"/><rect x="1001" y="191" width="1" height="1" fill="#ff0000"/><rect x="1002" y="190" width="1" height="1" fill="#ff0000"/><rect x="1003" y="191" width="1" height="1" fill="#ff0000"/><rect x="1004" y="192" width="1" height="1" fill="#ff0000"/><rect x="1005" y="191" width="1" height="1" fill="#ff0000"/><rect x="1006" y="190" width="1" height="1" fill="#ff0000"/><rect x="1007" y="191" width="1" height="1" fill="#ff0000"/><rect x="1008" y="192" width="1" height="1" fill="#ff0000"/><rect x="1009" y="191" width="1" height="1" fill="#ff0000"/><rect x="1010" y="190" width="1" height="1" fill="#ff0000"/><rect x="1011" y="191" width="1" height="1" fill="#ff0000"/><rect x="1012" y="192" width="1" height="1" fill="#ff0000"/><rect x="1013" y="191" width="1" height="1" fill="#ff0000"/><rect x="1014" y="190" width="1" height="1" fill="#ff0000"/><rect x="1015" y="191" width="1" height="1" fill="#ff0000"/><rect x="1016" y="192" width="1" height="1" fill="#ff0000"/><rect x="1017" y="191" width="1" height="1" fill="#ff0000"/><rect x="1018" y="190" width="1" height="1" fill="#ff0000"/><rect x="1019" y="191" width="1" height="1" fill="#ff0000"/><rect x="1020" y="192" width="1" height="1" fill="#ff0000"/><rect x="1021" y="191" width="1" height="1" fill="#ff0000"/><rect x="1022" y="190" width="1" height="1" fill="#ff0000"/><rect x="1023" y="191" width="1" height="1" fill="#ff0000"/><rect x="1024" y="192" width="1" height="1" fill="#ff0000"/><rect x="1025" y="191" width="1" height="1" fill="#ff0000"/><rect x="1026" y="190" width="1" height="1" fill="#ff0000"/><rect x="1027" y="191" width="1" height="1" fill="#ff0000"/><rect x="1028" y="192" width="1" height="1" fill="#ff0000"/><rect x="1029" y="191" width="1" height="1" fill="#ff0000"/><rect x="1030" y="190" width="1" height="1" fill="#ff0000"/><rect x="1031" y="191" width="1" height="1" fill="#ff0000"/><rect x="1032" y="192" width="1" height="1" fill="#ff0000"/><rect x="1033" y="191" width="1" height="1" fill="#ff0000"/><rect x="1034" y="190" width="1" height="1" fill="#ff0000"/><rect x="1035" y="191" width="1" height="1" fill="#ff0000"/><rect x="1036" y="192" width="1" height="1" fill="#ff0000"/><rect x="1037" y="191" width="1" height="1" fill="#ff0000"/><rect x="1038" y="190" width="1" height="1" fill="#ff0000"/><rect x="1039" y="191" width="1" height="1" fill="#ff0000"/><rect x="1040" y="192" width="1" height="1" fill="#ff0000"/><rect x="1041" y="191" width="1" height="1" fill="#ff0000"/><rect x="1042" y="190" width="1" height="1" fill="#ff0000"/><rect x="1043" y="191" width="1" height="1" fill="#ff0000"/><rect x="1044" y="192" width="1" height="1" fill="#ff0000"/><rect x="1045" y="191" width="1" height="1" fill="#ff0000"/><rect x="1046" y="190" width="1" height="1" fill="#ff0000"/><rect x="1047" y="191" width="1" height="1" fill="#ff0000"/><rect x="1048" y="192" width="1" height="1" fill="#ff0000"/><rect x="1049" y="191" width="1" height="1" fill="#ff0000"/><rect x="1082" y="190" width="1" height="1" fill="#ff0000"/><rect x="1083" y="191" width="1" height="1" fill="#ff0000"/><rect x="1084" y="192" width="1" height="1" fill="#ff0000"/><rect x="1085" y="191" width="1" height="1" fill="#ff0000"/><rect x="1086" y="190" width="1" height="1" fill="#ff0000"/><rect x="1087" y="191" width="1" height="1" fill="#ff0000"/><rect x="1088" y="192" width="1" height="1" fill="#ff0000"/><rect x="1089" y="191" width="1" height="1" fill="#ff0000"/><rect x="1090" y="190" width="1" height="1" fill="#ff0000"/><rect x="1091" y="191" width="1" height="1" fill="#ff0000"/><rect x="1092" y="192" width="1" height="1" fill="#ff0000"/><rect x="1093" y="191" width="1" height="1" fill="#ff0000"/><rect x="1094" y="190" width="1" height="1" fill="#ff0000"/><rect x="1095" y="191" width="1" height="1" fill="#ff0000"/><rect x="1096" y="192" width="1" height="1" fill="#ff0000"/><rect x="1097" y="191" width="1" height="1" fill="#ff0000"/><rect x="1098" y="190" width="1" height="1" fill="#ff0000"/><rect x="1099" y="191" width="1" height="1" fill="#ff0000"/><rect x="1100" y="192" width="1" height="1" fill="#ff0000"/><rect x="1101" y="191" width="1" height="1" fill="#ff0000"/><rect x="1102" y="190" width="1" height="1" fill="#ff0000"/><rect x="1103" y="191" width="1" height="1" fill="#ff0000"/><rect x="1104" y="192" width="1" height="1" fill="#ff0000"/><rect x="1105" y="191" width="1" height="1" fill="#ff0000"/><rect x="1106" y="190" width="1" height="1" fill="#ff0000"/><rect x="1107" y="191" width="1" height="1" fill="#ff0000"/><rect x="1108" y="192" width="1" height="1" fill="#ff0000"/><rect x="1109" y="191" width="1" height="1" fill="#ff0000"/><rect x="1110" y="190" width="1" height="1" fill="#ff0000"/><rect x="1111" y="191" width="1" height="1" fill="#ff0000"/><rect x="1112" y="192" width="1" height="1" fill="#ff0000"/><rect x="1113" y="191" width="1" height="1" fill="#ff0000"/><rect x="1114" y="190" width="1" height="1" fill="#ff0000"/><rect x="1115" y="191" width="1" height="1" fill="#ff0000"/><rect x="1116" y="192" width="1" height="1" fill="#ff0000"/><rect x="1117" y="191" width="1" height="1" fill="#ff0000"/><rect x="1118" y="190" width="1" height="1" fill="#ff0000"/><rect x="1119" y="191" width="1" height="1" fill="#ff0000"/><rect x="1120" y="192" width="1" height="1" fill="#ff0000"/><rect x="1121" y="191" width="1" height="1" fill="#ff0000"/><rect x="1122" y="190" width="1" height="1" fill="#ff0000"/><rect x="1123" y="191" width="1" height="1" fill="#ff0000"/><rect x="1124" y="192" width="1" height="1" fill="#ff0000"/><rect x="1125" y="191" width="1" height="1" fill="#ff0000"/><rect x="1126" y="190" width="1" height="1" fill="#ff0000"/><rect x="1127" y="191" width="1" height="1" fill="#ff0000"/><rect x="1128" y="192" width="1" height="1" fill="#ff0000"/><rect x="1129" y="191" width="1" height="1" fill="#ff0000"/><rect x="1130" y="190" width="1" height="1" fill="#ff0000"/><rect x="1131" y="191" width="1" height="1" fill="#ff0000"/><rect x="1132" y="192" width="1" height="1" fill="#ff0000"/><rect x="1133" y="191" width="1" height="1" fill="#ff0000"/><rect x="1134" y="190" width="1" height="1" fill="#ff0000"/><rect x="1135" y="191" width="1" height="1" fill="#ff0000"/><rect x="1136" y="192" width="1" height="1" fill="#ff0000"/><rect x="1137" y="191" width="1" height="1" fill="#ff0000"/><rect x="1138" y="190" width="1" height="1" fill="#ff0000"/><rect x="1139" y="191" width="1" height="1" fill="#ff0000"/><rect x="1140" y="192" width="1" height="1" fill="#ff0000"/><rect x="1141" y="191" width="1" height="1" fill="#ff0000"/><rect x="1142" y="190" width="1" height="1" fill="#ff0000"/><rect x="1143" y="191" width="1" height="1" fill="#ff0000"/><rect x="1144" y="192" width="1" height="1" fill="#ff0000"/><rect x="1145" y="191" width="1" height="1" fill="#ff0000"/><rect x="946" y="280" width="1" height="1" fill="#ff0000"/><rect x="947" y="281" width="1" height="1" fill="#ff0000"/><rect x="948" y="282" width="1" height="1" fill="#ff0000"/><rect x="949" y="281" width="1" height="1" fill="#ff0000"/><rect x="950" y="280" width="1" height="1" fill="#ff0000"/><rect x="951" y="281" width="1" height="1" fill="#ff0000"/><rect x="952" y="282" width="1" height="1" fill="#ff0000"/><rect x="953" y="281" width="1" height="1" fill="#ff0000"/><rect x="954" y="280" width="1" height="1" fill="#ff0000"/><rect x="955" y="281" width="1" height="1" fill="#ff0000"/><rect x="956" y="282" width="1" height="1" fill="#ff0000"/><rect x="957" y="281" width="1" height="1" fill="#ff0000"/><rect x="958" y="280" width="1" height="1" fill="#ff0000"/><rect x="959" y="281" width="1" height="1" fill="#ff0000"/><rect x="960" y="282" width="1" height="1" fill="#ff0000"/><rect x="961" y="281" width="1" height="1" fill="#ff0000"/><rect x="962" y="280" width="1" height="1" fill="#ff0000"/><rect x="963" y="281" width="1" height="1" fill="#ff0000"/><rect x="964" y="282" width="1" height="1" fill="#ff0000"/><rect x="965" y="281" width="1" height="1" fill="#ff0000"/><rect x="966" y="280" width="1" height="1" fill="#ff0000"/><rect x="967" y="281" width="1" height="1" fill="#ff0000"/><rect x="968" y="282" width="1" height="1" fill="#ff0000"/><rect x="969" y="281" width="1" height="1" fill="#ff0000"/><rect x="970" y="280" width="1" height="1" fill="#ff0000"/><rect x="971" y="281" width="1" height="1" fill="#ff0000"/><rect x="972" y="282" width="1" height="1" fill="#ff0000"/><rect x="973" y="281" width="1" height="1" fill="#ff0000"/><rect x="974" y="280" width="1" height="1" fill="#ff0000"/><rect x="975" y="281" width="1" height="1" fill="#ff0000"/><rect x="976" y="282" width="1" height="1" fill="#ff0000"/><rect x="977" y="281" width="1" height="1" fill="#ff0000"/><rect x="978" y="280" width="1" height="1" fill="#ff0000"/><rect x="979" y="281" width="1" height="1" fill="#ff0000"/><rect x="980" y="282" width="1" height="1" fill="#ff0000"/><rect x="981" y="281" width="1" height="1" fill="#ff0000"/><rect x="982" y="280" width="1" height="1" fill="#ff0000"/><rect x="983" y="281" width="1" height="1" fill="#ff0000"/><rect x="984" y="282" width="1" height="1" fill="#ff0000"/><rect x="985" y="281" width="1" height="1" fill="#ff0000"/><rect x="986" y="280" width="1" height="1" fill="#ff0000"/><rect x="987" y="281" width="1" height="1" fill="#ff0000"/><rect x="988" y="282" width="1" height="1" fill="#ff0000"/><rect x="989" y="281" width="1" height="1" fill="#ff0000"/><rect x="990" y="280" width="1" height="1" fill="#ff0000"/><rect x="991" y="281" width="1" height="1" fill="#ff0000"/><rect x="992" y="282" width="1" height="1" fill="#ff0000"/><rect x="993" y="281" width="1" height="1" fill="#ff0000"/><rect x="946" y="298" width="1" height="1" fill="#ff0000"/><rect x="947" y="299" width="1" height="1" fill="#ff0000"/><rect x="948" y="300" width="1" height="1" fill="#ff0000"/><rect x="949" y="299" width="1" height="1" fill="#ff0000"/><rect x="950" y="298" width="1" height="1" fill="#ff0000"/><rect x="951" y="299" width="1" height="1" fill="#ff0000"/><rect x="952" y="300" width="1" height="1" fill="#ff0000"/><rect x="953" y="299" width="1" height="1" fill="#ff0000"/><rect x="954" y="298" width="1" height="1" fill="#ff0000"/><rect x="955" y="299" width="1" height="1" fill="#ff0000"/><rect x="956" y="300" width="1" height="1" fill="#ff0000"/><rect x="957" y="299" width="1" height="1" fill="#ff0000"/><rect x="958" y="298" width="1" height="1" fill="#ff0000"/><rect x="959" y="299" width="1" height="1" fill="#ff0000"/><rect x="960" y="300" width="1" height="1" fill="#ff0000"/><rect x="961" y="299" width="1" height="1" fill="#ff0000"/><rect x="962" y="298" width="1" height="1" fill="#ff0000"/><rect x="963" y="299" width="1" height="1" fill="#ff0000"/><rect x="964" y="300" width="1" height="1" fill="#ff0000"/><rect x="965" y="299" width="1" height="1" fill="#ff0000"/><rect x="966" y="298" width="1" height="1" fill="#ff0000"/><rect x="967" y="299" width="1" height="1" fill="#ff0000"/><rect x="968" y="300" width="1" height="1" fill="#ff0000"/><rect x="969" y="299" width="1" height="1" fill="#ff0000"/><rect x="970" y="298" width="1" height="1" fill="#ff0000"/><rect x="971" y="299" width="1" height="1" fill="#ff0000"/><rect x="972" y="300" width="1" height="1" fill="#ff0000"/><rect x="973" y="299" width="1" height="1" fill="#ff0000"/><rect x="974" y="298" width="1" height="1" fill="#ff0000"/><rect x="975" y="299" width="1" height="1" fill="#ff0000"/><rect x="976" y="300" width="1" height="1" fill="#ff0000"/><rect x="977" y="299" width="1" height="1" fill="#ff0000"/><rect x="978" y="298" width="1" height="1" fill="#ff0000"/><rect x="979" y="299" width="1" height="1" fill="#ff0000"/><rect x="980" y="300" width="1" height="1" fill="#ff0000"/><rect x="981" y="299" width="1" height="1" fill="#ff0000"/><rect x="982" y="298" width="1" height="1" fill="#ff0000"/><rect x="983" y="299" width="1" height="1" fill="#ff0000"/><rect x="984" y="300" width="1" height="1" fill="#ff0000"/><rect x="985" y="299" width="1" height="1" fill="#ff0000"/><rect x="986" y="298" width="1" height="1" fill="#ff0000"/><rect x="987" y="299" width="1" height="1" fill="#ff0000"/><rect x="988" y="300" width="1" height="1" fill="#ff0000"/><rect x="989" y="299" width="1" height="1" fill="#ff0000"/><rect x="990" y="298" width="1" height="1" fill="#ff0000"/><rect x="991" y="299" width="1" height="1" fill="#ff0000"/><rect x="992" y="300" width="1" height="1" fill="#ff0000"/><rect x="993" y="299" width="1" height="1" fill="#ff0000"/><rect x="994" y="298" width="1" height="1" fill="#ff0000"/><rect x="995" y="299" width="1" height="1" fill="#ff0000"/><rect x="996" y="300" width="1" height="1" fill="#ff0000"/><rect x="997" y="299" width="1" height="1" fill="#ff0000"/><rect x="998" y="298" width="1" height="1" fill="#ff0000"/><rect x="999" y="299" width="1" height="1" fill="#ff0000"/><rect x="1000" y="300" width="1" height="1" fill="#ff0000"/><rect x="1001" y="299" width="1" height="1" fill="#ff0000"/><rect x="946" y="334" width="1" height="1" fill="#ff0000"/><rect x="947" y="335" width="1" height="1" fill="#ff0000"/><rect x="948" y="336" width="1" height="1" fill="#ff0000"/><rect x="949" y="335" width="1" height="1" fill="#ff0000"/><rect x="950" y="334" width="1" height="1" fill="#ff0000"/><rect x="951" y="335" width="1" height="1" fill="#ff0000"/><rect x="952" y="336" width="1" height="1" fill="#ff0000"/><rect x="953" y="335" width="1" height="1" fill="#ff0000"/><rect x="954" y="334" width="1" height="1" fill="#ff0000"/><rect x="955" y="335" width="1" height="1" fill="#ff0000"/><rect x="956" y="336" width="1" height="1" fill="#ff0000"/><rect x="957" y="335" width="1" height="1" fill="#ff0000"/><rect x="958" y="334" width="1" height="1" fill="#ff0000"/><rect x="959" y="335" width="1" height="1" fill="#ff0000"/><rect x="960" y="336" width="1" height="1" fill="#ff0000"/><rect x="961" y="335" width="1" height="1" fill="#ff0000"/><rect x="962" y="334" width="1" height="1" fill="#ff0000"/><rect x="963" y="335" width="1" height="1" fill="#ff0000"/><rect x="964" y="336" width="1" height="1" fill="#ff0000"/><rect x="965" y="335" width="1" height="1" fill="#ff0000"/><rect x="966" y="334" width="1" height="1" fill="#ff0000"/><rect x="967" y="335" width="1" height="1" fill="#ff0000"/><rect x="968" y="336" width="1" height="1" fill="#ff0000"/><rect x="969" y="335" width="1" height="1" fill="#ff0000"/><rect x="970" y="334" width="1" height="1" fill="#ff0000"/><rect x="971" y="335" width="1" height="1" fill="#ff0000"/><rect x="972" y="336" width="1" height="1" fill="#ff0000"/><rect x="973" y="335" width="1" height="1" fill="#ff0000"/><rect x="974" y="334" width="1" height="1" fill="#ff0000"/><rect x="975" y="335" width="1" height="1" fill="#ff0000"/><rect x="976" y="336" width="1" height="1" fill="#ff0000"/><rect x="977" y="335" width="1" height="1" fill="#ff0000"/><rect x="978" y="334" width="1" height="1" fill="#ff0000"/><rect x="979" y="335" width="1" height="1" fill="#ff0000"/><rect x="980" y="336" width="1" height="1" fill="#ff0000"/><rect x="981" y="335" width="1" height="1" fill="#ff0000"/><rect x="982" y="334" width="1" height="1" fill="#ff0000"/><rect x="983" y="335" width="1" height="1" fill="#ff0000"/><rect x="984" y="336" width="1" height="1" fill="#ff0000"/><rect x="985" y="335" width="1" height="1" fill="#ff0000"/><rect x="986" y="334" width="1" height="1" fill="#ff0000"/><rect x="987" y="335" width="1" height="1" fill="#ff0000"/><rect x="988" y="336" width="1" height="1" fill="#ff0000"/><rect x="989" y="335" width="1" height="1" fill="#ff0000"/><rect x="990" y="334" width="1" height="1" fill="#ff0000"/><rect x="991" y="335" width="1" height="1" fill="#ff0000"/><rect x="992" y="336" width="1" height="1" fill="#ff0000"/><rect x="993" y="335" width="1" height="1" fill="#ff0000"/><rect x="994" y="334" width="1" height="1" fill="#ff0000"/><rect x="995" y="335" width="1" height="1" fill="#ff0000"/><rect x="996" y="336" width="1" height="1" fill="#ff0000"/><rect x="997" y="335" width="1" height="1" fill="#ff0000"/><rect x="998" y="334" width="1" height="1" fill="#ff0000"/><rect x="999" y="335" width="1" height="1" fill="#ff0000"/><rect x="1000" y="336" width="1" height="1" fill="#ff0000"/><rect x="1001" y="335" width="1" height="1" fill="#ff0000"/><rect x="1002" y="334" width="1" height="1" fill="#ff0000"/><rect x="1003" y="335" width="1" height="1" fill="#ff0000"/><rect x="1004" y="336" width="1" height="1" fill="#ff0000"/><rect x="1005" y="335" width="1" height="1" fill="#ff0000"/><rect x="1006" y="334" width="1" height="1" fill="#ff0000"/><rect x="1007" y="335" width="1" height="1" fill="#ff0000"/><rect x="1008" y="336" width="1" height="1" fill="#ff0000"/><rect x="1009" y="335" width="1" height="1" fill="#ff0000"/><rect x="1010" y="334" width="1" height="1" fill="#ff0000"/><rect x="1011" y="335" width="1" height="1" fill="#ff0000"/><rect x="1012" y="336" width="1" height="1" fill="#ff0000"/><rect x="1013" y="335" width="1" height="1" fill="#ff0000"/><rect x="1014" y="334" width="1" height="1" fill="#ff0000"/><rect x="1015" y="335" width="1" height="1" fill="#ff0000"/><rect x="1016" y="336" width="1" height="1" fill="#ff0000"/><rect x="1017" y="335" width="1" height="1" fill="#ff0000"/><rect x="1018" y="334" width="1" height="1" fill="#ff0000"/><rect x="1019" y="335" width="1" height="1" fill="#ff0000"/><rect x="1020" y="336" width="1" height="1" fill="#ff0000"/><rect x="1021" y="335" width="1" height="1" fill="#ff0000"/><rect x="1022" y="334" width="1" height="1" fill="#ff0000"/><rect x="1023" y="335" width="1" height="1" fill="#ff0000"/><rect x="1024" y="336" width="1" height="1" fill="#ff0000"/><rect x="1025" y="335" width="1" height="1" fill="#ff0000"/><rect x="946" y="496" width="1" height="1" fill="#ff0000"/><rect x="947" y="497" width="1" height="1" fill="#ff0000"/><rect x="948" y="498" width="1" height="1" fill="#ff0000"/><rect x="949" y="497" width="1" height="1" fill="#ff0000"/><rect x="950" y="496" width="1" height="1" fill="#ff0000"/><rect x="951" y="497" width="1" height="1" fill="#ff0000"/><rect x="952" y="498" width="1" height="1" fill="#ff0000"/><rect x="953" y="497" width="1" height="1" fill="#ff0000"/><rect x="954" y="496" width="1" height="1" fill="#ff0000"/><rect x="955" y="497" width="1" height="1" fill="#ff0000"/><rect x="956" y="498" width="1" height="1" fill="#ff0000"/><rect x="957" y="497" width="1" height="1" fill="#ff0000"/><rect x="958" y="496" width="1" height="1" fill="#ff0000"/><rect x="959" y="497" width="1" height="1" fill="#ff0000"/><rect x="960" y="498" width="1" height="1" fill="#ff0000"/><rect x="961" y="497" width="1" height="1" fill="#ff0000"/><rect x="962" y="496" width="1" height="1" fill="#ff0000"/><rect x="963" y="497" width="1" height="1" fill="#ff0000"/><rect x="964" y="498" width="1" height="1" fill="#ff0000"/><rect x="965" y="497" width="1" height="1" fill="#ff0000"/><rect x="966" y="496" width="1" height="1" fill="#ff0000"/><rect x="967" y="497" width="1" height="1" fill="#ff0000"/><rect x="968" y="498" width="1" height="1" fill="#ff0000"/><rect x="969" y="497" width="1" height="1" fill="#ff0000"/><rect x="978" y="496" width="1" height="1" fill="#ff0000"/><rect x="979" y="497" width="1" height="1" fill="#ff0000"/><rect x="980" y="498" width="1" height="1" fill="#ff0000"/><rect x="981" y="497" width="1" height="1" fill="#ff0000"/><rect x="982" y="496" width="1" height="1" fill="#ff0000"/><rect x="983" y="497" width="1" height="1" fill="#ff0000"/><rect x="984" y="498" width="1" height="1" fill="#ff0000"/><rect x="985" y="497" width="1" height="1" fill="#ff0000"/><rect x="986" y="496" width="1" height="1" fill="#ff0000"/><rect x="987" y="497" width="1" height="1" fill="#ff0000"/><rect x="988" y="498" width="1" height="1" fill="#ff0000"/><rect x="989" y="497" width="1" height="1" fill="#ff0000"/><rect x="990" y="496" width="1" height="1" fill="#ff0000"/><rect x="991" y="497" width="1" height="1" fill="#ff0000"/><rect x="992" y="498" width="1" height="1" fill="#ff0000"/><rect x="993" y="497" width="1" height="1" fill="#ff0000"/><rect x="994" y="496" width="1" height="1" fill="#ff0000"/><rect x="995" y="497" width="1" height="1" fill="#ff0000"/><rect x="996" y="498" width="1" height="1" fill="#ff0000"/><rect x="997" y="497" width="1" height="1" fill="#ff0000"/><rect x="998" y="496" width="1" height="1" fill="#ff0000"/><rect x="999" y="497" width="1" height="1" fill="#ff0000"/><rect x="1000" y="498" width="1" height="1" fill="#ff0000"/><rect x="1001" y="497" width="1" height="1" fill="#ff0000"/><rect x="1002" y="496" width="1" height="1" fill="#ff0000"/><rect x="1003" y="497" width="1" height="1" fill="#ff0000"/><rect x="1004" y="498" width="1" height="1" fill="#ff0000"/><rect x="1005" y="497" width="1" height="1" fill="#ff0000"/><rect x="1006" y="496" width="1" height="1" fill="#ff0000"/><rect x="1007" y="497" width="1" height="1" fill="#ff0000"/><rect x="1008" y="498" width="1" height="1" fill="#ff0000"/><rect x="1009" y="497" width="1" height="1" fill="#ff0000"/><rect x="1010" y="496" width="1" height="1" fill="#ff0000"/><rect x="1011" y="497" width="1" height="1" fill="#ff0000"/><rect x="1012" y="498" width="1" height="1" fill="#ff0000"/><rect x="1013" y="497" width="1" height="1" fill="#ff0000"/><rect x="1014" y="496" width="1" height="1" fill="#ff0000"/><rect x="1015" y="497" width="1" height="1" fill="#ff0000"/><rect x="1016" y="498" width="1" height="1" fill="#ff0000"/><rect x="1017" y="497" width="1" height="1" fill="#ff0000"/><rect x="946" y="550" width="1" height="1" fill="#ff0000"/><rect x="947" y="551" width="1" height="1" fill="#ff0000"/><rect x="948" y="552" width="1" height="1" fill="#ff0000"/><rect x="949" y="551" width="1" height="1" fill="#ff0000"/><rect x="950" y="550" width="1" height="1" fill="#ff0000"/><rect x="951" y="551" width="1" height="1" fill="#ff0000"/><rect x="952" y="552" width="1" height="1" fill="#ff0000"/><rect x="953" y="551" width="1" height="1" fill="#ff0000"/><rect x="954" y="550" width="1" height="1" fill="#ff0000"/><rect x="955" y="551" width="1" height="1" fill="#ff0000"/><rect x="956" y="552" width="1" height="1" fill="#ff0000"/><rect x="957" y="551" width="1" height="1" fill="#ff0000"/><rect x="958" y="550" width="1" height="1" fill="#ff0000"/><rect x="959" y="551" width="1" height="1" fill="#ff0000"/><rect x="960" y="552" width="1" height="1" fill="#ff0000"/><rect x="961" y="551" width="1" height="1" fill="#ff0000"/><rect x="962" y="550" width="1" height="1" fill="#ff0000"/><rect x="963" y="551" width="1" height="1" fill="#ff0000"/><rect x="964" y="552" width="1" height="1" fill="#ff0000"/><rect x="965" y="551" width="1" height="1" fill="#ff0000"/><rect x="966" y="550" width="1" height="1" fill="#ff0000"/><rect x="967" y="551" width="1" height="1" fill="#ff0000"/><rect x="968" y="552" width="1" height="1" fill="#ff0000"/><rect x="969" y="551" width="1" height="1" fill="#ff0000"/><rect x="970" y="550" width="1" height="1" fill="#ff0000"/><rect x="971" y="551" width="1" height="1" fill="#ff0000"/><rect x="972" y="552" width="1" height="1" fill="#ff0000"/><rect x="973" y="551" width="1" height="1" fill="#ff0000"/><rect x="974" y="550" width="1" height="1" fill="#ff0000"/><rect x="975" y="551" width="1" height="1" fill="#ff0000"/><rect x="976" y="552" width="1" height="1" fill="#ff0000"/><rect x="977" y="551" width="1" height="1" fill="#ff0000"/><rect x="978" y="550" width="1" height="1" fill="#ff0000"/><rect x="979" y="551" width="1" height="1" fill="#ff0000"/><rect x="980" y="552" width="1" height="1" fill="#ff0000"/><rect x="981" y="551" width="1" height="1" fill="#ff0000"/><rect x="982" y="550" width="1" height="1" fill="#ff0000"/><rect x="983" y="551" width="1" height="1" fill="#ff0000"/><rect x="984" y="552" width="1" height="1" fill="#ff0000"/><rect x="985" y="551" width="1" height="1" fill="#ff0000"/><rect x="946" y="622" width="1" height="1" fill="#ff0000"/><rect x="947" y="623" width="1" height="1" fill="#ff0000"/><rect x="948" y="624" width="1" height="1" fill="#ff0000"/><rect x="949" y="623" width="1" height="1" fill="#ff0000"/><rect x="950" y="622" width="1" height="1" fill="#ff0000"/><rect x="951" y="623" width="1" height="1" fill="#ff0000"/><rect x="952" y="624" width="1" height="1" fill="#ff0000"/><rect x="953" y="623" width="1" height="1" fill="#ff0000"/><rect x="954" y="622" width="1" height="1" fill="#ff0000"/><rect x="955" y="623" width="1" height="1" fill="#ff0000"/><rect x="956" y="624" width="1" height="1" fill="#ff0000"/><rect x="957" y="623" width="1" height="1" fill="#ff0000"/><rect x="958" y="622" width="1" height="1" fill="#ff0000"/><rect x="959" y="623" width="1" height="1" fill="#ff0000"/><rect x="960" y="624" width="1" height="1" fill="#ff0000"/><rect x="961" y="623" width="1" height="1" fill="#ff0000"/><rect x="962" y="622" width="1" height="1" fill="#ff0000"/><rect x="963" y="623" width="1" height="1" fill="#ff0000"/><rect x="964" y="624" width="1" height="1" fill="#ff0000"/><rect x="965" y="623" width="1" height="1" fill="#ff0000"/><rect x="966" y="622" width="1" height="1" fill="#ff0000"/><rect x="967" y="623" width="1" height="1" fill="#ff0000"/><rect x="968" y="624" width="1" height="1" fill="#ff0000"/><rect x="969" y="623" width="1" height="1" fill="#ff0000"/><rect x="970" y="622" width="1" height="1" fill="#ff0000"/><rect x="971" y="623" width="1" height="1" fill="#ff0000"/><rect x="972" y="624" width="1" height="1" fill="#ff0000"/><rect x="973" y="623" width="1" height="1" fill="#ff0000"/><rect x="974" y="622" width="1" height="1" fill="#ff0000"/><rect x="975" y="623" width="1" height="1" fill="#ff0000"/><rect x="976" y="624" width="1" height="1" fill="#ff0000"/><rect x="977" y="623" width="1" height="1" fill="#ff0000"/><rect x="978" y="622" width="1" height="1" fill="#ff0000"/><rect x="979" y="623" width="1" height="1" fill="#ff0000"/><rect x="980" y="624" width="1" height="1" fill="#ff0000"/><rect x="981" y="623" width="1" height="1" fill="#ff0000"/><rect x="982" y="622" width="1" height="1" fill="#ff0000"/><rect x="983" y="623" width="1" height="1" fill="#ff0000"/><rect x="984" y="624" width="1" height="1" fill="#ff0000"/><rect x="985" y="623" width="1" height="1" fill="#ff0000"/></svg>
<div class="a mono" style="left:724px;top:70.5px;width:30px;text-align:right;font-size:13.33px;line-height:18px;color:#9a9a9a">1</div>
<div class="a mono" style="left:786px;top:70.5px;font-size:13.33px;line-height:18px;white-space:pre"><span style="color:#0000ff">&lt;HTML&gt;</span></div>
<div class="a mono" style="left:724px;top:88.5px;width:30px;text-align:right;font-size:13.33px;line-height:18px;color:#9a9a9a">2</div>
<div class="a mono" style="left:786px;top:88.5px;font-size:13.33px;line-height:18px;white-space:pre"><span style="color:#0000ff">&lt;head&gt;</span></div>
<div class="a mono" style="left:724px;top:106.5px;width:30px;text-align:right;font-size:13.33px;line-height:18px;color:#9a9a9a">3</div>
<div class="a mono" style="left:786px;top:106.5px;font-size:13.33px;line-height:18px;white-space:pre"><span style="color:#000000">    </span><span style="color:#0000ff">&lt;title&gt;</span><span style="color:#000000;-webkit-text-stroke:0.3px #000">Tabla</span><span style="color:#0000ff">&lt;/title&gt;</span></div>
<div class="a mono" style="left:724px;top:124.5px;width:30px;text-align:right;font-size:13.33px;line-height:18px;color:#9a9a9a">4</div>
<div class="a mono" style="left:786px;top:124.5px;font-size:13.33px;line-height:18px;white-space:pre"><span style="color:#0000ff">&lt;/head&gt;</span></div>
<div class="a mono" style="left:724px;top:142.5px;width:30px;text-align:right;font-size:13.33px;line-height:18px;color:#9a9a9a">5</div>
<div class="a mono" style="left:786px;top:142.5px;font-size:13.33px;line-height:18px;white-space:pre"><span style="color:#0000ff">&lt;body&gt;</span></div>
<div class="a mono" style="left:724px;top:160.5px;width:30px;text-align:right;font-size:13.33px;line-height:18px;color:#9a9a9a">6</div>
<div class="a mono" style="left:786px;top:160.5px;font-size:13.33px;line-height:18px;white-space:pre"></div>
<div class="a mono" style="left:724px;top:178.5px;width:30px;text-align:right;font-size:13.33px;line-height:18px;color:#9a9a9a">7</div>
<div class="a mono" style="left:786px;top:178.5px;font-size:13.33px;line-height:18px;white-space:pre"><span style="color:#000000">    </span><span style="color:#000000">&lt;Tabla de animales en paligro de exticion</span><span style="color:#0000ff">&lt;/tr&gt;</span></div>
<div class="a mono" style="left:724px;top:196.5px;width:30px;text-align:right;font-size:13.33px;line-height:18px;color:#9a9a9a">8</div>
<div class="a mono" style="left:786px;top:196.5px;font-size:13.33px;line-height:18px;white-space:pre"></div>
<div class="a mono" style="left:724px;top:214.5px;width:30px;text-align:right;font-size:13.33px;line-height:18px;color:#9a9a9a">9</div>
<div class="a mono" style="left:786px;top:214.5px;font-size:13.33px;line-height:18px;white-space:pre"><span style="color:#000000">    </span><span style="color:#0000ff">&lt;table </span><span style="color:#ff0000">border</span><span style="color:#000000">=</span><span style="color:#8000ff">"1"</span><span style="color:#0000ff">&gt;</span></div>
<div class="a mono" style="left:724px;top:232.5px;width:30px;text-align:right;font-size:13.33px;line-height:18px;color:#9a9a9a">10</div>
<div class="a mono" style="left:786px;top:232.5px;font-size:13.33px;line-height:18px;white-space:pre"><span style="color:#000000">        </span><span style="color:#0000ff">&lt;table&gt;</span></div>
<div class="a mono" style="left:724px;top:250.5px;width:30px;text-align:right;font-size:13.33px;line-height:18px;color:#9a9a9a">11</div>
<div class="a mono" style="left:786px;top:250.5px;font-size:13.33px;line-height:18px;white-space:pre"><span style="color:#000000">            </span><span style="color:#0000ff">&lt;tr&gt;</span></div>
<div class="a mono" style="left:724px;top:268.5px;width:30px;text-align:right;font-size:13.33px;line-height:18px;color:#9a9a9a">12</div>
<div class="a mono" style="left:786px;top:268.5px;font-size:13.33px;line-height:18px;white-space:pre"><span style="color:#000000">                </span><span style="color:#0000ff">&lt;td&gt;</span><span style="color:#000000;-webkit-text-stroke:0.3px #000">nombre</span><span style="color:#0000ff">&lt;/td&gt;</span></div>
<div class="a mono" style="left:724px;top:286.5px;width:30px;text-align:right;font-size:13.33px;line-height:18px;color:#9a9a9a">13</div>
<div class="a mono" style="left:786px;top:286.5px;font-size:13.33px;line-height:18px;white-space:pre"><span style="color:#000000">                </span><span style="color:#0000ff">&lt;td&gt;</span><span style="color:#000000;-webkit-text-stroke:0.3px #000">cabezas</span><span style="color:#0000ff">&lt;/td&gt;</span></div>
<div class="a mono" style="left:724px;top:304.5px;width:30px;text-align:right;font-size:13.33px;line-height:18px;color:#9a9a9a">14</div>
<div class="a mono" style="left:786px;top:304.5px;font-size:13.33px;line-height:18px;white-space:pre"><span style="color:#000000">                </span><span style="color:#0000ff">&lt;td&gt;</span><span style="color:#000000;-webkit-text-stroke:0.3px #000">prevision 2010</span><span style="color:#0000ff">&lt;/td&gt;</span></div>
<div class="a mono" style="left:724px;top:322.5px;width:30px;text-align:right;font-size:13.33px;line-height:18px;color:#9a9a9a">15</div>
<div class="a mono" style="left:786px;top:322.5px;font-size:13.33px;line-height:18px;white-space:pre"><span style="color:#000000">                </span><span style="color:#0000ff">&lt;td&gt;</span><span style="color:#000000;-webkit-text-stroke:0.3px #000">previccion 2020</span><span style="color:#0000ff">&lt;/td&gt;</span></div>
<div class="a mono" style="left:724px;top:340.5px;width:30px;text-align:right;font-size:13.33px;line-height:18px;color:#9a9a9a">16</div>
<div class="a mono" style="left:786px;top:340.5px;font-size:13.33px;line-height:18px;white-space:pre"><span style="color:#000000">            </span><span style="color:#0000ff">&lt;/tr&gt;</span></div>
<div class="a mono" style="left:724px;top:358.5px;width:30px;text-align:right;font-size:13.33px;line-height:18px;color:#9a9a9a">17</div>
<div class="a mono" style="left:786px;top:358.5px;font-size:13.33px;line-height:18px;white-space:pre"><span style="color:#000000">            </span><span style="color:#0000ff">&lt;tr&gt;</span></div>
<div class="a mono" style="left:724px;top:376.5px;width:30px;text-align:right;font-size:13.33px;line-height:18px;color:#9a9a9a">18</div>
<div class="a mono" style="left:786px;top:376.5px;font-size:13.33px;line-height:18px;white-space:pre"><span style="color:#000000">                </span><span style="color:#0000ff">&lt;td</span><span style="color:#000000">&lt;Ballena&lt;/</span><span style="color:#ff0000">td</span><span style="color:#0000ff">&gt;</span></div>
<div class="a mono" style="left:724px;top:394.5px;width:30px;text-align:right;font-size:13.33px;line-height:18px;color:#9a9a9a">19</div>
<div class="a mono" style="left:786px;top:394.5px;font-size:13.33px;line-height:18px;white-space:pre"><span style="color:#000000">                </span><span style="color:#0000ff">&lt;td</span><span style="color:#000000">&lt;</span><span style="color:#ff0000">600</span><span style="color:#000000">&lt;/</span><span style="color:#ff0000">td</span><span style="color:#0000ff">&gt;</span></div>
<div class="a mono" style="left:724px;top:412.5px;width:30px;text-align:right;font-size:13.33px;line-height:18px;color:#9a9a9a">20</div>
<div class="a mono" style="left:786px;top:412.5px;font-size:13.33px;line-height:18px;white-space:pre"><span style="color:#000000">                </span><span style="color:#0000ff">&lt;td</span><span style="color:#000000">&lt;</span><span style="color:#ff0000">4000</span><span style="color:#000000">&lt;/</span><span style="color:#ff0000">td</span><span style="color:#0000ff">&gt;</span></div>
<div class="a mono" style="left:724px;top:430.5px;width:30px;text-align:right;font-size:13.33px;line-height:18px;color:#9a9a9a">21</div>
<div class="a mono" style="left:786px;top:430.5px;font-size:13.33px;line-height:18px;white-space:pre"><span style="color:#000000">                </span><span style="color:#0000ff">&lt;td&gt;</span><span style="color:#000000;-webkit-text-stroke:0.3px #000">1500</span></div>
<div class="a mono" style="left:724px;top:448.5px;width:30px;text-align:right;font-size:13.33px;line-height:18px;color:#9a9a9a">22</div>
<div class="a mono" style="left:786px;top:448.5px;font-size:13.33px;line-height:18px;white-space:pre"><span style="color:#000000">            </span><span style="color:#0000ff">&lt;/tr&gt;</span></div>
<div class="a mono" style="left:724px;top:466.5px;width:30px;text-align:right;font-size:13.33px;line-height:18px;color:#9a9a9a">23</div>
<div class="a mono" style="left:786px;top:466.5px;font-size:13.33px;line-height:18px;white-space:pre"><span style="color:#000000">            </span><span style="color:#0000ff">&lt;tr&gt;</span></div>
<div class="a mono" style="left:724px;top:484.5px;width:30px;text-align:right;font-size:13.33px;line-height:18px;color:#9a9a9a">24</div>
<div class="a mono" style="left:786px;top:484.5px;font-size:13.33px;line-height:18px;white-space:pre"><span style="color:#000000">                </span><span style="color:#0000ff">&lt;td&gt;</span><span style="color:#000000;-webkit-text-stroke:0.3px #000">oso pardo</span><span style="color:#0000ff">&lt;/td&gt;</span></div>
<div class="a mono" style="left:724px;top:502.5px;width:30px;text-align:right;font-size:13.33px;line-height:18px;color:#9a9a9a">25</div>
<div class="a mono" style="left:786px;top:502.5px;font-size:13.33px;line-height:18px;white-space:pre"><span style="color:#000000">                </span><span style="color:#0000ff">&lt;td&gt;</span><span style="color:#000000;-webkit-text-stroke:0.3px #000">50</span><span style="color:#0000ff">&lt;/td&gt;</span></div>
<div class="a mono" style="left:724px;top:520.5px;width:30px;text-align:right;font-size:13.33px;line-height:18px;color:#9a9a9a">26</div>
<div class="a mono" style="left:786px;top:520.5px;font-size:13.33px;line-height:18px;white-space:pre"><span style="color:#000000">                </span><span style="color:#0000ff">&lt;td&gt;</span><span style="color:#000000;-webkit-text-stroke:0.3px #000">250</span><span style="color:#0000ff">&lt;/td&gt;</span></div>
<div class="a mono" style="left:724px;top:538.5px;width:30px;text-align:right;font-size:13.33px;line-height:18px;color:#9a9a9a">27</div>
<div class="a mono" style="left:786px;top:538.5px;font-size:13.33px;line-height:18px;white-space:pre"><span style="color:#000000">                </span><span style="color:#0000ff">&lt;td&gt;</span><span style="color:#000000;-webkit-text-stroke:0.3px #000">lince</span><span style="color:#0000ff">&lt;/td&gt;</span></div>
<div class="a mono" style="left:724px;top:556.5px;width:30px;text-align:right;font-size:13.33px;line-height:18px;color:#9a9a9a">28</div>
<div class="a mono" style="left:786px;top:556.5px;font-size:13.33px;line-height:18px;white-space:pre"><span style="color:#000000">                </span><span style="color:#0000ff">&lt;td&gt;</span><span style="color:#000000;-webkit-text-stroke:0.3px #000">10</span><span style="color:#0000ff">&lt;/td&gt;</span></div>
<div class="a mono" style="left:724px;top:574.5px;width:30px;text-align:right;font-size:13.33px;line-height:18px;color:#9a9a9a">29</div>
<div class="a mono" style="left:786px;top:574.5px;font-size:13.33px;line-height:18px;white-space:pre"><span style="color:#000000">            </span><span style="color:#0000ff">&lt;/tr&gt;</span></div>
<div class="a mono" style="left:724px;top:592.5px;width:30px;text-align:right;font-size:13.33px;line-height:18px;color:#9a9a9a">30</div>
<div class="a mono" style="left:786px;top:592.5px;font-size:13.33px;line-height:18px;white-space:pre"><span style="color:#000000">            </span><span style="color:#0000ff">&lt;tr&gt;</span></div>
<div class="a mono" style="left:724px;top:610.5px;width:30px;text-align:right;font-size:13.33px;line-height:18px;color:#9a9a9a">31</div>
<div class="a mono" style="left:786px;top:610.5px;font-size:13.33px;line-height:18px;white-space:pre"><span style="color:#000000">                </span><span style="color:#0000ff">&lt;td&gt;</span><span style="color:#000000;-webkit-text-stroke:0.3px #000">tigre</span><span style="color:#0000ff">&lt;/td&gt;</span></div>
<div class="a mono" style="left:724px;top:628.5px;width:30px;text-align:right;font-size:13.33px;line-height:18px;color:#9a9a9a">32</div>
<div class="a mono" style="left:786px;top:628.5px;font-size:13.33px;line-height:18px;white-space:pre"><span style="color:#000000">                </span><span style="color:#0000ff">&lt;td&gt;</span><span style="color:#000000;-webkit-text-stroke:0.3px #000">300</span><span style="color:#0000ff">&lt;/td&gt;</span></div>
<div class="a mono" style="left:724px;top:646.5px;width:30px;text-align:right;font-size:13.33px;line-height:18px;color:#9a9a9a">33</div>
<div class="a mono" style="left:786px;top:646.5px;font-size:13.33px;line-height:18px;white-space:pre"><span style="color:#000000">                </span><span style="color:#0000ff">&lt;td&gt;</span><span style="color:#000000;-webkit-text-stroke:0.3px #000">210</span><span style="color:#0000ff">&lt;/td&gt;</span></div>
<div class="a mono" style="left:724px;top:664.5px;width:30px;text-align:right;font-size:13.33px;line-height:18px;color:#9a9a9a">34</div>
<div class="a mono" style="left:786px;top:664.5px;font-size:13.33px;line-height:18px;white-space:pre"><span style="color:#000000">            </span><span style="color:#0000ff">&lt;/tr&gt;</span></div>
<div class="a mono" style="left:724px;top:682.5px;width:30px;text-align:right;font-size:13.33px;line-height:18px;color:#9a9a9a">35</div>
<div class="a mono" style="left:786px;top:682.5px;font-size:13.33px;line-height:18px;white-space:pre"><span style="color:#000000">        </span><span style="color:#0000ff">&lt;/body&gt;</span></div>
<div class="a mono" style="left:724px;top:700.5px;width:30px;text-align:right;font-size:13.33px;line-height:18px;color:#9a9a9a">36</div>
<div class="a mono" style="left:786px;top:700.5px;font-size:13.33px;line-height:18px;white-space:pre"><span style="color:#000000">    </span><span style="color:#0000ff">&lt;/table&gt;</span></div>
<div class="a mono" style="left:724px;top:718.5px;width:30px;text-align:right;font-size:13.33px;line-height:18px;color:#9a9a9a">37</div>
<div class="a mono" style="left:786px;top:718.5px;font-size:13.33px;line-height:18px;white-space:pre"></div>
<div class="a mono" style="left:724px;top:736.5px;width:30px;text-align:right;font-size:13.33px;line-height:18px;color:#9a9a9a">38</div>
<div class="a mono" style="left:786px;top:736.5px;font-size:13.33px;line-height:18px;white-space:pre"><span style="color:#0000ff">&lt;/body&gt;</span></div>
<div class="a mono" style="left:724px;top:754.5px;width:30px;text-align:right;font-size:13.33px;line-height:18px;color:#9a9a9a">39</div>
<div class="a mono" style="left:786px;top:754.5px;font-size:13.33px;line-height:18px;white-space:pre"><span style="color:#0000ff">&lt;/html&gt;</span></div></body></html>
